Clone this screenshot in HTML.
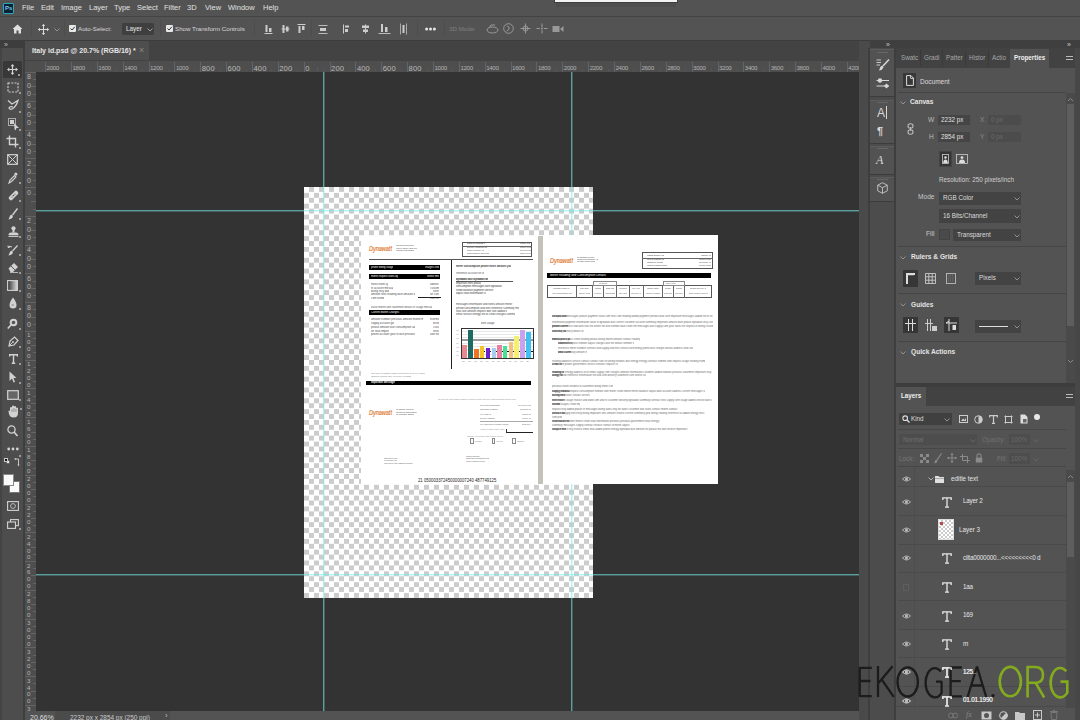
<!DOCTYPE html>
<html><head><meta charset="utf-8">
<style>
*{margin:0;padding:0;box-sizing:border-box}
html,body{width:1080px;height:720px;overflow:hidden;background:#535353;font-family:"Liberation Sans",sans-serif;color:#d8d8d8}
.a{position:absolute}
.t{position:absolute;white-space:nowrap;line-height:1}
.mi{position:absolute;top:4px;font-size:7.5px;color:#e0e0e0;white-space:nowrap;line-height:1}
.checker{background:conic-gradient(#ccc 0 25%,#fff 0 50%,#ccc 0 75%,#fff 0 100%) 0 0/10px 10.82px}
.gv{position:absolute;width:2px;background:linear-gradient(90deg,rgba(120,235,235,0.58) 50%,rgba(120,235,235,0.25) 50%)}
.gh{position:absolute;height:2px;background:linear-gradient(180deg,rgba(120,235,235,0.58) 50%,rgba(120,235,235,0.25) 50%)}
svg{position:absolute;overflow:visible}
</style></head><body>
<!-- MENUBAR -->
<div class="a" style="left:0;top:0;width:1080px;height:17px;background:#535353"></div>
<div class="a" style="left:3px;top:3px;width:11px;height:11px;background:#0a2236;border:1px solid #2aa8b8;border-radius:1px"></div>
<div class="t" style="left:5px;top:5px;font-size:6px;font-weight:bold;color:#7ac8f0">Ps</div>
<div class="mi" style="left:22px">File</div>
<div class="mi" style="left:41px">Edit</div>
<div class="mi" style="left:61px">Image</div>
<div class="mi" style="left:89px">Layer</div>
<div class="mi" style="left:114px">Type</div>
<div class="mi" style="left:137px">Select</div>
<div class="mi" style="left:164px">Filter</div>
<div class="mi" style="left:187px">3D</div>
<div class="mi" style="left:205px">View</div>
<div class="mi" style="left:228px">Window</div>
<div class="mi" style="left:263px">Help</div>
<div class="a" style="left:554px;top:0;width:124px;height:2.5px;background:#3c3c3c"></div><div class="a" style="left:556px;top:2.5px;width:120px;height:4px;background:#4e4e4e"></div>
<div class="a" style="left:555px;top:0;width:122px;height:1.5px;background:#f2f2f2"></div>
<div class="a" style="left:0;top:16px;width:1080px;height:1px;background:#444"></div>

<!-- OPTIONS BAR -->
<div class="a" style="left:0;top:17px;width:1080px;height:23px;background:#535353"></div>

<svg style="left:12px;top:24px" width="11" height="10" viewBox="0 0 11 10"><path d="M5.5 0.5 L10.5 5 L9 5 L9 9.5 L6.5 9.5 L6.5 6.5 L4.5 6.5 L4.5 9.5 L2 9.5 L2 5 L0.5 5 Z" fill="#e0e0e0"/></svg>
<div class="a" style="left:31px;top:20px;width:1px;height:17px;background:#4e4e4e"></div>
<svg style="left:38px;top:24px" width="11" height="11" viewBox="0 0 11 11"><path d="M5.5 0.5 V10.5 M0.5 5.5 H10.5" stroke="#ddd" stroke-width="1"/><path d="M5.5 0 L3.8 2 H7.2Z M5.5 11 L3.8 9 H7.2Z M0 5.5 L2 3.8 V7.2Z M11 5.5 L9 3.8 V7.2Z" fill="#ddd"/></svg>
<svg style="left:54px;top:28px" width="6" height="4" viewBox="0 0 6 4"><path d="M0.5 0.5 L3 3 L5.5 0.5" stroke="#999" fill="none" stroke-width="0.9"/></svg>
<div class="a" style="left:64px;top:20px;width:1px;height:17px;background:#4e4e4e"></div>
<div class="a" style="left:69px;top:25px;width:7px;height:7px;background:#e8e8e8;border-radius:1px"></div>
<svg style="left:69px;top:25px" width="7" height="7" viewBox="0 0 7 7"><path d="M1.5 3.5 L3 5 L5.8 1.8" stroke="#333" fill="none" stroke-width="1"/></svg>
<div class="t" style="left:78px;top:26px;font-size:6.2px;color:#d8d8d8">Auto-Select:</div>
<div class="a" style="left:122px;top:23px;width:32px;height:12px;background:#3f3f3f;border-radius:1px"></div>
<div class="t" style="left:126px;top:26px;font-size:6.4px;color:#e6e6e6">Layer</div>
<svg style="left:147px;top:28px" width="6" height="4" viewBox="0 0 6 4"><path d="M0.5 0.5 L3 3 L5.5 0.5" stroke="#aaa" fill="none" stroke-width="0.9"/></svg>
<div class="a" style="left:160px;top:20px;width:1px;height:17px;background:#4e4e4e"></div>
<div class="a" style="left:166px;top:25px;width:7px;height:7px;background:#e8e8e8;border-radius:1px"></div>
<svg style="left:166px;top:25px" width="7" height="7" viewBox="0 0 7 7"><path d="M1.5 3.5 L3 5 L5.8 1.8" stroke="#333" fill="none" stroke-width="1"/></svg>
<div class="t" style="left:175px;top:26px;font-size:6.2px;color:#d8d8d8">Show Transform Controls</div>
<div class="a" style="left:254px;top:20px;width:1px;height:17px;background:#4e4e4e"></div>
<svg style="left:264px;top:24px" width="9" height="10" viewBox="0 0 9 10"><path d="M0.5 9.5 H8.5" stroke="#ccc"/><rect x="1.5" y="1" width="2" height="7" fill="#ccc"/><rect x="5" y="4" width="2.5" height="4" fill="#ccc"/></svg>
<svg style="left:281px;top:24px" width="9" height="10" viewBox="0 0 9 10"><path d="M0.5 5 H8.5" stroke="#ccc"/><rect x="1.5" y="1" width="2" height="8" fill="#ccc"/><rect x="5" y="2.5" width="2.5" height="5" fill="#ccc"/></svg>
<svg style="left:297px;top:24px" width="9" height="10" viewBox="0 0 9 10"><path d="M0.5 0.5 H8.5" stroke="#ccc"/><rect x="1.5" y="2" width="2" height="7" fill="#ccc"/><rect x="5" y="2" width="2.5" height="4" fill="#ccc"/></svg>
<div class="a" style="left:311px;top:20px;width:1px;height:17px;background:#4e4e4e"></div>
<svg style="left:318px;top:25px" width="10" height="9" viewBox="0 0 10 9"><path d="M0.5 0.5 H9.5 M0.5 8.5 H9.5" stroke="#bbb"/><rect x="2" y="3" width="6" height="3" fill="#ccc"/></svg>
<svg style="left:343px;top:24px" width="8" height="10" viewBox="0 0 8 10"><path d="M0.5 0.5 V9.5" stroke="#ccc"/><rect x="2" y="1.5" width="4" height="2" fill="#ccc"/><rect x="2" y="5" width="3" height="3" fill="#ccc"/></svg>
<svg style="left:361px;top:24px" width="9" height="10" viewBox="0 0 9 10"><path d="M4.5 0.5 V9.5" stroke="#ccc"/><rect x="1" y="1.5" width="7" height="2.5" fill="#ccc"/><rect x="2" y="5.5" width="5" height="2.5" fill="#ccc"/></svg>
<svg style="left:378px;top:23px" width="13" height="11" viewBox="0 0 13 11"><path d="M0.5 10.5 H12.5" stroke="#bbb"/><rect x="3" y="1" width="2" height="8" fill="#ccc"/><rect x="7" y="4" width="2.5" height="5" fill="#ccc"/></svg>
<svg style="left:400px;top:23px" width="7" height="12" viewBox="0 0 7 12"><path d="M0.5 0.5 V11.5 M6.5 0.5 V11.5" stroke="#aaa"/><rect x="2.5" y="2" width="2" height="8" fill="#ccc"/></svg>
<div class="a" style="left:417px;top:20px;width:1px;height:17px;background:#4e4e4e"></div>
<svg style="left:425px;top:27px" width="11" height="4" viewBox="0 0 11 4"><circle cx="1.6" cy="2" r="1.5" fill="#e6e6e6"/><circle cx="5.5" cy="2" r="1.5" fill="#e6e6e6"/><circle cx="9.4" cy="2" r="1.5" fill="#e6e6e6"/></svg>
<div class="a" style="left:444px;top:20px;width:1px;height:17px;background:#4e4e4e"></div>
<div class="t" style="left:449px;top:26px;font-size:6.2px;color:#808080">3D Mode:</div>
<svg style="left:486px;top:24px" width="13" height="10" viewBox="0 0 13 10"><ellipse cx="6.5" cy="6" rx="5.5" ry="3" stroke="#999" fill="none"/><path d="M3 4 L5 1 L9 1" stroke="#999" fill="none"/></svg>
<svg style="left:503px;top:23px" width="11" height="11" viewBox="0 0 11 11"><circle cx="5.5" cy="5.5" r="4.8" stroke="#999" fill="none"/><path d="M4 3 Q7 3.5 6 6 Q5 8 3.5 8" stroke="#999" fill="none"/></svg>
<svg style="left:520px;top:23px" width="11" height="11" viewBox="0 0 11 11"><path d="M5.5 0.5 V10.5 M0.5 5.5 H10.5" stroke="#999"/><circle cx="5.5" cy="5.5" r="2.5" stroke="#999" fill="none"/></svg>
<svg style="left:536px;top:23px" width="12" height="11" viewBox="0 0 12 11"><path d="M6 0.5 V4 M6 7 V10.5 M0.5 5.5 H4 M8 5.5 H11.5" stroke="#999"/><circle cx="6" cy="5.5" r="1" fill="#999"/></svg>
<svg style="left:552px;top:25px" width="12" height="8" viewBox="0 0 12 8"><rect x="0.5" y="1" width="7" height="6" fill="#999"/><path d="M8 4 L11.5 1 V7 Z" fill="#999"/></svg>


<!-- TAB ROW -->
<div class="a" style="left:0;top:40px;width:1080px;height:1px;background:#3c3c3c"></div>
<div class="a" style="left:25px;top:41px;width:835px;height:20px;background:#434343"></div>
<div class="a" style="left:25px;top:41px;width:124px;height:19px;background:#4e4e4e"></div>
<div class="t" style="left:32px;top:47px;font-size:7px;font-weight:bold;color:#e6e6e6">Italy id.psd @ 20.7% (RGB/16) *</div>
<div class="t" style="left:139px;top:46px;font-size:9px;color:#8a8a8a">×</div>

<!-- RULERS -->
<div class="a" style="left:25px;top:61px;width:835px;height:11px;background:#4e4e4e"></div>
<div class="a" style="left:25px;top:72px;width:11px;height:639px;background:#4e4e4e"></div>
<div class="a" style="left:0;top:0;width:1080px;height:720px;overflow:hidden;clip-path:inset(61px 221px 9px 25px)"><div class="t" style="left:27px;top:73.4px;font-size:7px;color:#b4b4b4">8</div>
<div class="t" style="left:27px;top:81.9px;font-size:7px;color:#b4b4b4">0</div>
<div class="t" style="left:27px;top:90.4px;font-size:7px;color:#b4b4b4">0</div>
<div class="t" style="left:27px;top:102.2px;font-size:7px;color:#b4b4b4">6</div>
<div class="t" style="left:27px;top:110.7px;font-size:7px;color:#b4b4b4">0</div>
<div class="t" style="left:27px;top:119.2px;font-size:7px;color:#b4b4b4">0</div>
<div class="t" style="left:27px;top:131.0px;font-size:7px;color:#b4b4b4">4</div>
<div class="t" style="left:27px;top:139.5px;font-size:7px;color:#b4b4b4">0</div>
<div class="t" style="left:27px;top:148.0px;font-size:7px;color:#b4b4b4">0</div>
<div class="t" style="left:27px;top:159.7px;font-size:7px;color:#b4b4b4">2</div>
<div class="t" style="left:27px;top:168.2px;font-size:7px;color:#b4b4b4">0</div>
<div class="t" style="left:27px;top:176.7px;font-size:7px;color:#b4b4b4">0</div>
<div class="t" style="left:27px;top:188.5px;font-size:7px;color:#b4b4b4">0</div>
<div class="t" style="left:27px;top:217.3px;font-size:7px;color:#b4b4b4">2</div>
<div class="t" style="left:27px;top:225.8px;font-size:7px;color:#b4b4b4">0</div>
<div class="t" style="left:27px;top:234.3px;font-size:7px;color:#b4b4b4">0</div>
<div class="t" style="left:27px;top:246.0px;font-size:7px;color:#b4b4b4">4</div>
<div class="t" style="left:27px;top:254.5px;font-size:7px;color:#b4b4b4">0</div>
<div class="t" style="left:27px;top:263.0px;font-size:7px;color:#b4b4b4">0</div>
<div class="t" style="left:27px;top:274.8px;font-size:7px;color:#b4b4b4">6</div>
<div class="t" style="left:27px;top:283.3px;font-size:7px;color:#b4b4b4">0</div>
<div class="t" style="left:27px;top:291.8px;font-size:7px;color:#b4b4b4">0</div>
<div class="t" style="left:27px;top:303.6px;font-size:7px;color:#b4b4b4">8</div>
<div class="t" style="left:27px;top:312.1px;font-size:7px;color:#b4b4b4">0</div>
<div class="t" style="left:27px;top:320.6px;font-size:7px;color:#b4b4b4">0</div>
<div class="t" style="left:27px;top:332.4px;font-size:6.2px;color:#b4b4b4">1</div>
<div class="t" style="left:27px;top:339.2px;font-size:6.2px;color:#b4b4b4">0</div>
<div class="t" style="left:27px;top:346.2px;font-size:6.2px;color:#b4b4b4">0</div>
<div class="t" style="left:27px;top:353.1px;font-size:6.2px;color:#b4b4b4">0</div>
<div class="t" style="left:27px;top:361.1px;font-size:6.2px;color:#b4b4b4">1</div>
<div class="t" style="left:27px;top:368.0px;font-size:6.2px;color:#b4b4b4">2</div>
<div class="t" style="left:27px;top:374.9px;font-size:6.2px;color:#b4b4b4">0</div>
<div class="t" style="left:27px;top:381.8px;font-size:6.2px;color:#b4b4b4">0</div>
<div class="t" style="left:27px;top:389.9px;font-size:6.2px;color:#b4b4b4">1</div>
<div class="t" style="left:27px;top:396.8px;font-size:6.2px;color:#b4b4b4">4</div>
<div class="t" style="left:27px;top:403.7px;font-size:6.2px;color:#b4b4b4">0</div>
<div class="t" style="left:27px;top:410.6px;font-size:6.2px;color:#b4b4b4">0</div>
<div class="t" style="left:27px;top:418.7px;font-size:6.2px;color:#b4b4b4">1</div>
<div class="t" style="left:27px;top:425.6px;font-size:6.2px;color:#b4b4b4">6</div>
<div class="t" style="left:27px;top:432.5px;font-size:6.2px;color:#b4b4b4">0</div>
<div class="t" style="left:27px;top:439.4px;font-size:6.2px;color:#b4b4b4">0</div>
<div class="t" style="left:27px;top:447.4px;font-size:6.2px;color:#b4b4b4">1</div>
<div class="t" style="left:27px;top:454.3px;font-size:6.2px;color:#b4b4b4">8</div>
<div class="t" style="left:27px;top:461.2px;font-size:6.2px;color:#b4b4b4">0</div>
<div class="t" style="left:27px;top:468.1px;font-size:6.2px;color:#b4b4b4">0</div>
<div class="t" style="left:27px;top:476.2px;font-size:6.2px;color:#b4b4b4">2</div>
<div class="t" style="left:27px;top:483.1px;font-size:6.2px;color:#b4b4b4">0</div>
<div class="t" style="left:27px;top:490.0px;font-size:6.2px;color:#b4b4b4">0</div>
<div class="t" style="left:27px;top:496.9px;font-size:6.2px;color:#b4b4b4">0</div>
<div class="t" style="left:27px;top:505.0px;font-size:6.2px;color:#b4b4b4">2</div>
<div class="t" style="left:27px;top:511.9px;font-size:6.2px;color:#b4b4b4">2</div>
<div class="t" style="left:27px;top:518.8px;font-size:6.2px;color:#b4b4b4">0</div>
<div class="t" style="left:27px;top:525.7px;font-size:6.2px;color:#b4b4b4">0</div>
<div class="t" style="left:27px;top:533.7px;font-size:6.2px;color:#b4b4b4">2</div>
<div class="t" style="left:27px;top:540.6px;font-size:6.2px;color:#b4b4b4">4</div>
<div class="t" style="left:27px;top:547.5px;font-size:6.2px;color:#b4b4b4">0</div>
<div class="t" style="left:27px;top:554.4px;font-size:6.2px;color:#b4b4b4">0</div>
<div class="t" style="left:27px;top:562.5px;font-size:6.2px;color:#b4b4b4">2</div>
<div class="t" style="left:27px;top:569.4px;font-size:6.2px;color:#b4b4b4">6</div>
<div class="t" style="left:27px;top:576.3px;font-size:6.2px;color:#b4b4b4">0</div>
<div class="t" style="left:27px;top:583.2px;font-size:6.2px;color:#b4b4b4">0</div>
<div class="t" style="left:27px;top:591.3px;font-size:6.2px;color:#b4b4b4">2</div>
<div class="t" style="left:27px;top:598.2px;font-size:6.2px;color:#b4b4b4">8</div>
<div class="t" style="left:27px;top:605.1px;font-size:6.2px;color:#b4b4b4">0</div>
<div class="t" style="left:27px;top:612.0px;font-size:6.2px;color:#b4b4b4">0</div>
<div class="t" style="left:27px;top:620.0px;font-size:6.2px;color:#b4b4b4">3</div>
<div class="t" style="left:27px;top:626.9px;font-size:6.2px;color:#b4b4b4">0</div>
<div class="t" style="left:27px;top:633.8px;font-size:6.2px;color:#b4b4b4">0</div>
<div class="t" style="left:27px;top:640.8px;font-size:6.2px;color:#b4b4b4">0</div>
<div class="t" style="left:27px;top:648.8px;font-size:6.2px;color:#b4b4b4">3</div>
<div class="t" style="left:27px;top:655.7px;font-size:6.2px;color:#b4b4b4">2</div>
<div class="t" style="left:27px;top:662.6px;font-size:6.2px;color:#b4b4b4">0</div>
<div class="t" style="left:27px;top:669.5px;font-size:6.2px;color:#b4b4b4">0</div>
<div class="t" style="left:27px;top:677.6px;font-size:6.2px;color:#b4b4b4">3</div>
<div class="t" style="left:27px;top:684.5px;font-size:6.2px;color:#b4b4b4">4</div>
<div class="t" style="left:27px;top:691.4px;font-size:6.2px;color:#b4b4b4">0</div>
<div class="t" style="left:27px;top:698.3px;font-size:6.2px;color:#b4b4b4">0</div>
<div class="t" style="left:27px;top:706.4px;font-size:6.2px;color:#b4b4b4">3</div>
<div class="t" style="left:27px;top:713.3px;font-size:6.2px;color:#b4b4b4">6</div>
<div class="t" style="left:27px;top:720.2px;font-size:6.2px;color:#b4b4b4">0</div>
<div class="t" style="left:27px;top:727.1px;font-size:6.2px;color:#b4b4b4">0</div><div class="a" style="left:45.1px;top:62px;width:1px;height:10px;background:#646464"></div>
<div class="a" style="left:51.6px;top:69px;width:1px;height:2px;background:#575757"></div>
<div class="a" style="left:58.0px;top:67px;width:1px;height:4px;background:#5a5a5a"></div>
<div class="a" style="left:64.5px;top:69px;width:1px;height:2px;background:#575757"></div>
<div class="t" style="left:46.6px;top:65px;font-size:6.2px;color:#b0b0b0;letter-spacing:-0.35px">2000</div>
<div class="a" style="left:71.0px;top:62px;width:1px;height:10px;background:#646464"></div>
<div class="a" style="left:77.4px;top:69px;width:1px;height:2px;background:#575757"></div>
<div class="a" style="left:83.9px;top:67px;width:1px;height:4px;background:#5a5a5a"></div>
<div class="a" style="left:90.4px;top:69px;width:1px;height:2px;background:#575757"></div>
<div class="t" style="left:72.5px;top:65px;font-size:6.2px;color:#b0b0b0;letter-spacing:-0.35px">1800</div>
<div class="a" style="left:96.8px;top:62px;width:1px;height:10px;background:#646464"></div>
<div class="a" style="left:103.3px;top:69px;width:1px;height:2px;background:#575757"></div>
<div class="a" style="left:109.8px;top:67px;width:1px;height:4px;background:#5a5a5a"></div>
<div class="a" style="left:116.2px;top:69px;width:1px;height:2px;background:#575757"></div>
<div class="t" style="left:98.3px;top:65px;font-size:6.2px;color:#b0b0b0;letter-spacing:-0.35px">1600</div>
<div class="a" style="left:122.7px;top:62px;width:1px;height:10px;background:#646464"></div>
<div class="a" style="left:129.1px;top:69px;width:1px;height:2px;background:#575757"></div>
<div class="a" style="left:135.6px;top:67px;width:1px;height:4px;background:#5a5a5a"></div>
<div class="a" style="left:142.1px;top:69px;width:1px;height:2px;background:#575757"></div>
<div class="t" style="left:124.2px;top:65px;font-size:6.2px;color:#b0b0b0;letter-spacing:-0.35px">1400</div>
<div class="a" style="left:148.5px;top:62px;width:1px;height:10px;background:#646464"></div>
<div class="a" style="left:155.0px;top:69px;width:1px;height:2px;background:#575757"></div>
<div class="a" style="left:161.5px;top:67px;width:1px;height:4px;background:#5a5a5a"></div>
<div class="a" style="left:167.9px;top:69px;width:1px;height:2px;background:#575757"></div>
<div class="t" style="left:150.0px;top:65px;font-size:6.2px;color:#b0b0b0;letter-spacing:-0.35px">1200</div>
<div class="a" style="left:174.4px;top:62px;width:1px;height:10px;background:#646464"></div>
<div class="a" style="left:180.9px;top:69px;width:1px;height:2px;background:#575757"></div>
<div class="a" style="left:187.3px;top:67px;width:1px;height:4px;background:#5a5a5a"></div>
<div class="a" style="left:193.8px;top:69px;width:1px;height:2px;background:#575757"></div>
<div class="t" style="left:175.9px;top:65px;font-size:6.2px;color:#b0b0b0;letter-spacing:-0.35px">1000</div>
<div class="a" style="left:200.3px;top:62px;width:1px;height:10px;background:#646464"></div>
<div class="a" style="left:206.7px;top:69px;width:1px;height:2px;background:#575757"></div>
<div class="a" style="left:213.2px;top:67px;width:1px;height:4px;background:#5a5a5a"></div>
<div class="a" style="left:219.7px;top:69px;width:1px;height:2px;background:#575757"></div>
<div class="t" style="left:201.8px;top:64.5px;font-size:7.6px;color:#b8b8b8;letter-spacing:0.1px">800</div>
<div class="a" style="left:226.1px;top:62px;width:1px;height:10px;background:#646464"></div>
<div class="a" style="left:232.6px;top:69px;width:1px;height:2px;background:#575757"></div>
<div class="a" style="left:239.1px;top:67px;width:1px;height:4px;background:#5a5a5a"></div>
<div class="a" style="left:245.5px;top:69px;width:1px;height:2px;background:#575757"></div>
<div class="t" style="left:227.6px;top:64.5px;font-size:7.6px;color:#b8b8b8;letter-spacing:0.1px">600</div>
<div class="a" style="left:252.0px;top:62px;width:1px;height:10px;background:#646464"></div>
<div class="a" style="left:258.4px;top:69px;width:1px;height:2px;background:#575757"></div>
<div class="a" style="left:264.9px;top:67px;width:1px;height:4px;background:#5a5a5a"></div>
<div class="a" style="left:271.4px;top:69px;width:1px;height:2px;background:#575757"></div>
<div class="t" style="left:253.5px;top:64.5px;font-size:7.6px;color:#b8b8b8;letter-spacing:0.1px">400</div>
<div class="a" style="left:277.8px;top:62px;width:1px;height:10px;background:#646464"></div>
<div class="a" style="left:284.3px;top:69px;width:1px;height:2px;background:#575757"></div>
<div class="a" style="left:290.8px;top:67px;width:1px;height:4px;background:#5a5a5a"></div>
<div class="a" style="left:297.2px;top:69px;width:1px;height:2px;background:#575757"></div>
<div class="t" style="left:279.3px;top:64.5px;font-size:7.6px;color:#b8b8b8;letter-spacing:0.1px">200</div>
<div class="a" style="left:303.7px;top:62px;width:1px;height:10px;background:#646464"></div>
<div class="a" style="left:310.2px;top:69px;width:1px;height:2px;background:#575757"></div>
<div class="a" style="left:316.6px;top:67px;width:1px;height:4px;background:#5a5a5a"></div>
<div class="a" style="left:323.1px;top:69px;width:1px;height:2px;background:#575757"></div>
<div class="t" style="left:305.2px;top:64.5px;font-size:7.6px;color:#b8b8b8;letter-spacing:0.1px">0</div>
<div class="a" style="left:329.6px;top:62px;width:1px;height:10px;background:#646464"></div>
<div class="a" style="left:336.0px;top:69px;width:1px;height:2px;background:#575757"></div>
<div class="a" style="left:342.5px;top:67px;width:1px;height:4px;background:#5a5a5a"></div>
<div class="a" style="left:349.0px;top:69px;width:1px;height:2px;background:#575757"></div>
<div class="t" style="left:331.1px;top:64.5px;font-size:7.6px;color:#b8b8b8;letter-spacing:0.1px">200</div>
<div class="a" style="left:355.4px;top:62px;width:1px;height:10px;background:#646464"></div>
<div class="a" style="left:361.9px;top:69px;width:1px;height:2px;background:#575757"></div>
<div class="a" style="left:368.3px;top:67px;width:1px;height:4px;background:#5a5a5a"></div>
<div class="a" style="left:374.8px;top:69px;width:1px;height:2px;background:#575757"></div>
<div class="t" style="left:356.9px;top:64.5px;font-size:7.6px;color:#b8b8b8;letter-spacing:0.1px">400</div>
<div class="a" style="left:381.3px;top:62px;width:1px;height:10px;background:#646464"></div>
<div class="a" style="left:387.7px;top:69px;width:1px;height:2px;background:#575757"></div>
<div class="a" style="left:394.2px;top:67px;width:1px;height:4px;background:#5a5a5a"></div>
<div class="a" style="left:400.7px;top:69px;width:1px;height:2px;background:#575757"></div>
<div class="t" style="left:382.8px;top:64.5px;font-size:7.6px;color:#b8b8b8;letter-spacing:0.1px">600</div>
<div class="a" style="left:407.1px;top:62px;width:1px;height:10px;background:#646464"></div>
<div class="a" style="left:413.6px;top:69px;width:1px;height:2px;background:#575757"></div>
<div class="a" style="left:420.1px;top:67px;width:1px;height:4px;background:#5a5a5a"></div>
<div class="a" style="left:426.5px;top:69px;width:1px;height:2px;background:#575757"></div>
<div class="t" style="left:408.6px;top:64.5px;font-size:7.6px;color:#b8b8b8;letter-spacing:0.1px">800</div>
<div class="a" style="left:433.0px;top:62px;width:1px;height:10px;background:#646464"></div>
<div class="a" style="left:439.5px;top:69px;width:1px;height:2px;background:#575757"></div>
<div class="a" style="left:445.9px;top:67px;width:1px;height:4px;background:#5a5a5a"></div>
<div class="a" style="left:452.4px;top:69px;width:1px;height:2px;background:#575757"></div>
<div class="t" style="left:434.5px;top:65px;font-size:6.2px;color:#b0b0b0;letter-spacing:-0.35px">1000</div>
<div class="a" style="left:458.9px;top:62px;width:1px;height:10px;background:#646464"></div>
<div class="a" style="left:465.3px;top:69px;width:1px;height:2px;background:#575757"></div>
<div class="a" style="left:471.8px;top:67px;width:1px;height:4px;background:#5a5a5a"></div>
<div class="a" style="left:478.3px;top:69px;width:1px;height:2px;background:#575757"></div>
<div class="t" style="left:460.4px;top:65px;font-size:6.2px;color:#b0b0b0;letter-spacing:-0.35px">1200</div>
<div class="a" style="left:484.7px;top:62px;width:1px;height:10px;background:#646464"></div>
<div class="a" style="left:491.2px;top:69px;width:1px;height:2px;background:#575757"></div>
<div class="a" style="left:497.6px;top:67px;width:1px;height:4px;background:#5a5a5a"></div>
<div class="a" style="left:504.1px;top:69px;width:1px;height:2px;background:#575757"></div>
<div class="t" style="left:486.2px;top:65px;font-size:6.2px;color:#b0b0b0;letter-spacing:-0.35px">1400</div>
<div class="a" style="left:510.6px;top:62px;width:1px;height:10px;background:#646464"></div>
<div class="a" style="left:517.0px;top:69px;width:1px;height:2px;background:#575757"></div>
<div class="a" style="left:523.5px;top:67px;width:1px;height:4px;background:#5a5a5a"></div>
<div class="a" style="left:530.0px;top:69px;width:1px;height:2px;background:#575757"></div>
<div class="t" style="left:512.1px;top:65px;font-size:6.2px;color:#b0b0b0;letter-spacing:-0.35px">1600</div>
<div class="a" style="left:536.4px;top:62px;width:1px;height:10px;background:#646464"></div>
<div class="a" style="left:542.9px;top:69px;width:1px;height:2px;background:#575757"></div>
<div class="a" style="left:549.4px;top:67px;width:1px;height:4px;background:#5a5a5a"></div>
<div class="a" style="left:555.8px;top:69px;width:1px;height:2px;background:#575757"></div>
<div class="t" style="left:537.9px;top:65px;font-size:6.2px;color:#b0b0b0;letter-spacing:-0.35px">1800</div>
<div class="a" style="left:562.3px;top:62px;width:1px;height:10px;background:#646464"></div>
<div class="a" style="left:568.8px;top:69px;width:1px;height:2px;background:#575757"></div>
<div class="a" style="left:575.2px;top:67px;width:1px;height:4px;background:#5a5a5a"></div>
<div class="a" style="left:581.7px;top:69px;width:1px;height:2px;background:#575757"></div>
<div class="t" style="left:563.8px;top:65px;font-size:6.2px;color:#b0b0b0;letter-spacing:-0.35px">2000</div>
<div class="a" style="left:588.2px;top:62px;width:1px;height:10px;background:#646464"></div>
<div class="a" style="left:594.6px;top:69px;width:1px;height:2px;background:#575757"></div>
<div class="a" style="left:601.1px;top:67px;width:1px;height:4px;background:#5a5a5a"></div>
<div class="a" style="left:607.6px;top:69px;width:1px;height:2px;background:#575757"></div>
<div class="t" style="left:589.7px;top:65px;font-size:6.2px;color:#b0b0b0;letter-spacing:-0.35px">2200</div>
<div class="a" style="left:614.0px;top:62px;width:1px;height:10px;background:#646464"></div>
<div class="a" style="left:620.5px;top:69px;width:1px;height:2px;background:#575757"></div>
<div class="a" style="left:626.9px;top:67px;width:1px;height:4px;background:#5a5a5a"></div>
<div class="a" style="left:633.4px;top:69px;width:1px;height:2px;background:#575757"></div>
<div class="t" style="left:615.5px;top:65px;font-size:6.2px;color:#b0b0b0;letter-spacing:-0.35px">2400</div>
<div class="a" style="left:639.9px;top:62px;width:1px;height:10px;background:#646464"></div>
<div class="a" style="left:646.3px;top:69px;width:1px;height:2px;background:#575757"></div>
<div class="a" style="left:652.8px;top:67px;width:1px;height:4px;background:#5a5a5a"></div>
<div class="a" style="left:659.3px;top:69px;width:1px;height:2px;background:#575757"></div>
<div class="t" style="left:641.4px;top:65px;font-size:6.2px;color:#b0b0b0;letter-spacing:-0.35px">2600</div>
<div class="a" style="left:665.7px;top:62px;width:1px;height:10px;background:#646464"></div>
<div class="a" style="left:672.2px;top:69px;width:1px;height:2px;background:#575757"></div>
<div class="a" style="left:678.7px;top:67px;width:1px;height:4px;background:#5a5a5a"></div>
<div class="a" style="left:685.1px;top:69px;width:1px;height:2px;background:#575757"></div>
<div class="t" style="left:667.2px;top:65px;font-size:6.2px;color:#b0b0b0;letter-spacing:-0.35px">2800</div>
<div class="a" style="left:691.6px;top:62px;width:1px;height:10px;background:#646464"></div>
<div class="a" style="left:698.1px;top:69px;width:1px;height:2px;background:#575757"></div>
<div class="a" style="left:704.5px;top:67px;width:1px;height:4px;background:#5a5a5a"></div>
<div class="a" style="left:711.0px;top:69px;width:1px;height:2px;background:#575757"></div>
<div class="t" style="left:693.1px;top:65px;font-size:6.2px;color:#b0b0b0;letter-spacing:-0.35px">3000</div>
<div class="a" style="left:717.5px;top:62px;width:1px;height:10px;background:#646464"></div>
<div class="a" style="left:723.9px;top:69px;width:1px;height:2px;background:#575757"></div>
<div class="a" style="left:730.4px;top:67px;width:1px;height:4px;background:#5a5a5a"></div>
<div class="a" style="left:736.9px;top:69px;width:1px;height:2px;background:#575757"></div>
<div class="t" style="left:719.0px;top:65px;font-size:6.2px;color:#b0b0b0;letter-spacing:-0.35px">3200</div>
<div class="a" style="left:743.3px;top:62px;width:1px;height:10px;background:#646464"></div>
<div class="a" style="left:749.8px;top:69px;width:1px;height:2px;background:#575757"></div>
<div class="a" style="left:756.2px;top:67px;width:1px;height:4px;background:#5a5a5a"></div>
<div class="a" style="left:762.7px;top:69px;width:1px;height:2px;background:#575757"></div>
<div class="t" style="left:744.8px;top:65px;font-size:6.2px;color:#b0b0b0;letter-spacing:-0.35px">3400</div>
<div class="a" style="left:769.2px;top:62px;width:1px;height:10px;background:#646464"></div>
<div class="a" style="left:775.6px;top:69px;width:1px;height:2px;background:#575757"></div>
<div class="a" style="left:782.1px;top:67px;width:1px;height:4px;background:#5a5a5a"></div>
<div class="a" style="left:788.6px;top:69px;width:1px;height:2px;background:#575757"></div>
<div class="t" style="left:770.7px;top:65px;font-size:6.2px;color:#b0b0b0;letter-spacing:-0.35px">3600</div>
<div class="a" style="left:795.0px;top:62px;width:1px;height:10px;background:#646464"></div>
<div class="a" style="left:801.5px;top:69px;width:1px;height:2px;background:#575757"></div>
<div class="a" style="left:808.0px;top:67px;width:1px;height:4px;background:#5a5a5a"></div>
<div class="a" style="left:814.4px;top:69px;width:1px;height:2px;background:#575757"></div>
<div class="t" style="left:796.5px;top:65px;font-size:6.2px;color:#b0b0b0;letter-spacing:-0.35px">3800</div>
<div class="a" style="left:820.9px;top:62px;width:1px;height:10px;background:#646464"></div>
<div class="a" style="left:827.4px;top:69px;width:1px;height:2px;background:#575757"></div>
<div class="a" style="left:833.8px;top:67px;width:1px;height:4px;background:#5a5a5a"></div>
<div class="a" style="left:840.3px;top:69px;width:1px;height:2px;background:#575757"></div>
<div class="t" style="left:822.4px;top:65px;font-size:6.2px;color:#b0b0b0;letter-spacing:-0.35px">4000</div>
<div class="a" style="left:846.8px;top:62px;width:1px;height:10px;background:#646464"></div>
<div class="a" style="left:853.2px;top:69px;width:1px;height:2px;background:#575757"></div>
<div class="t" style="left:848.3px;top:65px;font-size:6.2px;color:#b0b0b0;letter-spacing:-0.35px">4200</div>
<div class="a" style="left:25px;top:71.9px;width:11px;height:1px;background:#646464"></div>
<div class="a" style="left:33px;top:79.1px;width:3px;height:1px;background:#666"></div>
<div class="a" style="left:31px;top:86.3px;width:5px;height:1px;background:#666"></div>
<div class="a" style="left:33px;top:93.5px;width:3px;height:1px;background:#666"></div>
<div class="a" style="left:25px;top:100.7px;width:11px;height:1px;background:#646464"></div>
<div class="a" style="left:33px;top:107.9px;width:3px;height:1px;background:#666"></div>
<div class="a" style="left:31px;top:115.1px;width:5px;height:1px;background:#666"></div>
<div class="a" style="left:33px;top:122.3px;width:3px;height:1px;background:#666"></div>
<div class="a" style="left:25px;top:129.5px;width:11px;height:1px;background:#646464"></div>
<div class="a" style="left:33px;top:136.7px;width:3px;height:1px;background:#666"></div>
<div class="a" style="left:31px;top:143.8px;width:5px;height:1px;background:#666"></div>
<div class="a" style="left:33px;top:151.0px;width:3px;height:1px;background:#666"></div>
<div class="a" style="left:25px;top:158.2px;width:11px;height:1px;background:#646464"></div>
<div class="a" style="left:33px;top:165.4px;width:3px;height:1px;background:#666"></div>
<div class="a" style="left:31px;top:172.6px;width:5px;height:1px;background:#666"></div>
<div class="a" style="left:33px;top:179.8px;width:3px;height:1px;background:#666"></div>
<div class="a" style="left:25px;top:187.0px;width:11px;height:1px;background:#646464"></div>
<div class="a" style="left:33px;top:194.2px;width:3px;height:1px;background:#666"></div>
<div class="a" style="left:31px;top:201.4px;width:5px;height:1px;background:#666"></div>
<div class="a" style="left:33px;top:208.6px;width:3px;height:1px;background:#666"></div>
<div class="a" style="left:25px;top:215.8px;width:11px;height:1px;background:#646464"></div>
<div class="a" style="left:33px;top:223.0px;width:3px;height:1px;background:#666"></div>
<div class="a" style="left:31px;top:230.2px;width:5px;height:1px;background:#666"></div>
<div class="a" style="left:33px;top:237.3px;width:3px;height:1px;background:#666"></div>
<div class="a" style="left:25px;top:244.5px;width:11px;height:1px;background:#646464"></div>
<div class="a" style="left:33px;top:251.7px;width:3px;height:1px;background:#666"></div>
<div class="a" style="left:31px;top:258.9px;width:5px;height:1px;background:#666"></div>
<div class="a" style="left:33px;top:266.1px;width:3px;height:1px;background:#666"></div>
<div class="a" style="left:25px;top:273.3px;width:11px;height:1px;background:#646464"></div>
<div class="a" style="left:33px;top:280.5px;width:3px;height:1px;background:#666"></div>
<div class="a" style="left:31px;top:287.7px;width:5px;height:1px;background:#666"></div>
<div class="a" style="left:33px;top:294.9px;width:3px;height:1px;background:#666"></div>
<div class="a" style="left:25px;top:302.1px;width:11px;height:1px;background:#646464"></div>
<div class="a" style="left:33px;top:309.3px;width:3px;height:1px;background:#666"></div>
<div class="a" style="left:31px;top:316.5px;width:5px;height:1px;background:#666"></div>
<div class="a" style="left:33px;top:323.7px;width:3px;height:1px;background:#666"></div>
<div class="a" style="left:25px;top:330.9px;width:11px;height:1px;background:#646464"></div>
<div class="a" style="left:33px;top:338.0px;width:3px;height:1px;background:#666"></div>
<div class="a" style="left:31px;top:345.2px;width:5px;height:1px;background:#666"></div>
<div class="a" style="left:33px;top:352.4px;width:3px;height:1px;background:#666"></div>
<div class="a" style="left:25px;top:359.6px;width:11px;height:1px;background:#646464"></div>
<div class="a" style="left:33px;top:366.8px;width:3px;height:1px;background:#666"></div>
<div class="a" style="left:31px;top:374.0px;width:5px;height:1px;background:#666"></div>
<div class="a" style="left:33px;top:381.2px;width:3px;height:1px;background:#666"></div>
<div class="a" style="left:25px;top:388.4px;width:11px;height:1px;background:#646464"></div>
<div class="a" style="left:33px;top:395.6px;width:3px;height:1px;background:#666"></div>
<div class="a" style="left:31px;top:402.8px;width:5px;height:1px;background:#666"></div>
<div class="a" style="left:33px;top:410.0px;width:3px;height:1px;background:#666"></div>
<div class="a" style="left:25px;top:417.2px;width:11px;height:1px;background:#646464"></div>
<div class="a" style="left:33px;top:424.4px;width:3px;height:1px;background:#666"></div>
<div class="a" style="left:31px;top:431.5px;width:5px;height:1px;background:#666"></div>
<div class="a" style="left:33px;top:438.7px;width:3px;height:1px;background:#666"></div>
<div class="a" style="left:25px;top:445.9px;width:11px;height:1px;background:#646464"></div>
<div class="a" style="left:33px;top:453.1px;width:3px;height:1px;background:#666"></div>
<div class="a" style="left:31px;top:460.3px;width:5px;height:1px;background:#666"></div>
<div class="a" style="left:33px;top:467.5px;width:3px;height:1px;background:#666"></div>
<div class="a" style="left:25px;top:474.7px;width:11px;height:1px;background:#646464"></div>
<div class="a" style="left:33px;top:481.9px;width:3px;height:1px;background:#666"></div>
<div class="a" style="left:31px;top:489.1px;width:5px;height:1px;background:#666"></div>
<div class="a" style="left:33px;top:496.3px;width:3px;height:1px;background:#666"></div>
<div class="a" style="left:25px;top:503.5px;width:11px;height:1px;background:#646464"></div>
<div class="a" style="left:33px;top:510.7px;width:3px;height:1px;background:#666"></div>
<div class="a" style="left:31px;top:517.9px;width:5px;height:1px;background:#666"></div>
<div class="a" style="left:33px;top:525.0px;width:3px;height:1px;background:#666"></div>
<div class="a" style="left:25px;top:532.2px;width:11px;height:1px;background:#646464"></div>
<div class="a" style="left:33px;top:539.4px;width:3px;height:1px;background:#666"></div>
<div class="a" style="left:31px;top:546.6px;width:5px;height:1px;background:#666"></div>
<div class="a" style="left:33px;top:553.8px;width:3px;height:1px;background:#666"></div>
<div class="a" style="left:25px;top:561.0px;width:11px;height:1px;background:#646464"></div>
<div class="a" style="left:33px;top:568.2px;width:3px;height:1px;background:#666"></div>
<div class="a" style="left:31px;top:575.4px;width:5px;height:1px;background:#666"></div>
<div class="a" style="left:33px;top:582.6px;width:3px;height:1px;background:#666"></div>
<div class="a" style="left:25px;top:589.8px;width:11px;height:1px;background:#646464"></div>
<div class="a" style="left:33px;top:597.0px;width:3px;height:1px;background:#666"></div>
<div class="a" style="left:31px;top:604.2px;width:5px;height:1px;background:#666"></div>
<div class="a" style="left:33px;top:611.4px;width:3px;height:1px;background:#666"></div>
<div class="a" style="left:25px;top:618.5px;width:11px;height:1px;background:#646464"></div>
<div class="a" style="left:33px;top:625.7px;width:3px;height:1px;background:#666"></div>
<div class="a" style="left:31px;top:632.9px;width:5px;height:1px;background:#666"></div>
<div class="a" style="left:33px;top:640.1px;width:3px;height:1px;background:#666"></div>
<div class="a" style="left:25px;top:647.3px;width:11px;height:1px;background:#646464"></div>
<div class="a" style="left:33px;top:654.5px;width:3px;height:1px;background:#666"></div>
<div class="a" style="left:31px;top:661.7px;width:5px;height:1px;background:#666"></div>
<div class="a" style="left:33px;top:668.9px;width:3px;height:1px;background:#666"></div>
<div class="a" style="left:25px;top:676.1px;width:11px;height:1px;background:#646464"></div>
<div class="a" style="left:33px;top:683.3px;width:3px;height:1px;background:#666"></div>
<div class="a" style="left:31px;top:690.5px;width:5px;height:1px;background:#666"></div>
<div class="a" style="left:33px;top:697.7px;width:3px;height:1px;background:#666"></div>
<div class="a" style="left:25px;top:704.9px;width:11px;height:1px;background:#646464"></div>
</div>
<div class="a" style="left:25px;top:61px;width:11px;height:11px;background:#4e4e4e"></div>
<!-- CANVAS -->
<div class="a" style="left:36px;top:72px;width:823px;height:639px;background:#333"></div>

<!-- STATUS -->
<div class="a" style="left:25px;top:711px;width:835px;height:9px;background:#535353"></div><div class="a" style="left:55px;top:711px;width:115px;height:9px;background:#4b4b4b"></div>
<div class="t" style="left:30px;top:714px;font-size:7px;color:#ddd">20.66%</div>
<div class="t" style="left:70px;top:714px;font-size:7px;color:#ccc;transform:scaleX(0.92);transform-origin:0 0">2232 px x 2854 px (250 ppi)</div>
<div class="t" style="left:165px;top:712px;font-size:8px;color:#bbb">›</div>

<!-- LEFT TOOLBAR -->
<div class="a" style="left:0;top:41px;width:25px;height:679px;background:#4d4d4d"></div>
<div class="a" style="left:0;top:41px;width:25px;height:7px;background:#3d3d3d"></div>
<div class="t" style="left:4px;top:41px;font-size:7px;color:#bbb">»</div>
<div class="a" style="left:0;top:48px;width:2px;height:672px;background:#444"></div>
<div class="a" style="left:23px;top:48px;width:2px;height:672px;background:#3e3e3e"></div>
<div class="a" style="left:3px;top:61px;width:19px;height:17px;background:#383838;border-radius:1px"></div>
<svg style="left:7px;top:64px" width="11" height="11" viewBox="0 0 11 11"><path d="M5.5 1.5 V9.5 M1.5 5.5 H9.5" stroke="#d2d2d2" stroke-width="1.2"/><path d="M5.5 0 L3.6 2.3 H7.4Z M5.5 11 L3.6 8.7 H7.4Z M0 5.5 L2.3 3.6 V7.4Z M11 5.5 L8.7 3.6 V7.4Z" fill="#d2d2d2"/></svg>
<div class="a" style="left:18px;top:74px;width:2px;height:2px;background:#9a9a9a"></div>
<svg style="left:7px;top:82px" width="12" height="11" viewBox="0 0 12 11"><rect x="1" y="1" width="10" height="9" stroke="#d2d2d2" fill="none" stroke-width="1.1" stroke-dasharray="2 1.3"/></svg>
<div class="a" style="left:19px;top:92px;width:2px;height:2px;background:#9a9a9a"></div>
<svg style="left:7px;top:99px" width="12" height="12" viewBox="0 0 12 12"><path d="M1 1.5 L5 5 L11 1.5 Q9 8 5 10 Q3 11 2 9 Q3 7 6 8" stroke="#d2d2d2" fill="none" stroke-width="1.3"/></svg>
<div class="a" style="left:19px;top:111px;width:2px;height:2px;background:#9a9a9a"></div>
<svg style="left:8px;top:118px" width="12" height="13" viewBox="0 0 12 13"><rect x="0.5" y="0.5" width="7" height="7" stroke="#aaa" fill="none"/><rect x="2" y="2" width="4" height="4" fill="#d2d2d2"/><path d="M6 5 L11 10 L8.5 10 L7.5 12.5 L6.5 11 Z" fill="#d2d2d2"/></svg>
<div class="a" style="left:19px;top:129px;width:2px;height:2px;background:#9a9a9a"></div>
<svg style="left:6px;top:135px" width="13" height="13" viewBox="0 0 13 13"><path d="M3.5 0.5 V9.5 H12.5 M0.5 3.5 H9.5 V12.5" stroke="#d2d2d2" fill="none" stroke-width="1.4"/></svg>
<div class="a" style="left:19px;top:147px;width:2px;height:2px;background:#9a9a9a"></div>
<svg style="left:7px;top:154px" width="11" height="11" viewBox="0 0 11 11"><rect x="0.7" y="0.7" width="9.6" height="9.6" stroke="#d2d2d2" fill="none" stroke-width="1.2"/><path d="M1 1 L10 10 M10 1 L1 10" stroke="#d2d2d2" stroke-width="1"/></svg>
<svg style="left:8px;top:172px" width="10" height="12" viewBox="0 0 10 12"><path d="M1 11 L2 8 L6.5 3.5 L8 5 L3.5 9.5 Z" stroke="#d2d2d2" fill="none" stroke-width="1.1"/><path d="M6 2 L7.5 0.5 Q9.5 0.5 9.5 2.5 L8 4 Z" fill="#d2d2d2"/></svg>
<div class="a" style="left:19px;top:182px;width:2px;height:2px;background:#9a9a9a"></div>
<svg style="left:8px;top:190px" width="11" height="11" viewBox="0 0 11 11"><path d="M1 7 L7 1 Q8 0 9.5 1.5 Q11 3 10 4 L4 10 Q3 11 1.5 9.5 Q0 8 1 7Z" fill="#d2d2d2"/><circle cx="5.5" cy="5.5" r="0.8" fill="#555"/><circle cx="4" cy="7" r="0.6" fill="#555"/><circle cx="7" cy="4" r="0.6" fill="#555"/></svg>
<div class="a" style="left:19px;top:200px;width:2px;height:2px;background:#9a9a9a"></div>
<svg style="left:8px;top:208px" width="10" height="12" viewBox="0 0 10 12"><path d="M9.5 0.5 L4.5 7" stroke="#d2d2d2" stroke-width="1.3"/><path d="M4 6.5 Q1.5 7 1.5 9 L0.5 11.5 Q3.5 11 5 9 Z" fill="#d2d2d2"/></svg>
<div class="a" style="left:19px;top:218px;width:2px;height:2px;background:#9a9a9a"></div>
<svg style="left:8px;top:226px" width="11" height="11" viewBox="0 0 11 11"><circle cx="5.5" cy="2.3" r="2.1" fill="#d2d2d2"/><rect x="4.5" y="3.5" width="2" height="3" fill="#d2d2d2"/><path d="M0.5 9 Q0.5 6.5 3 6.5 H8 Q10.5 6.5 10.5 9 Z" fill="#d2d2d2"/><rect x="0.5" y="9.7" width="10" height="1.2" fill="#d2d2d2"/></svg>
<div class="a" style="left:19px;top:236px;width:2px;height:2px;background:#9a9a9a"></div>
<svg style="left:7px;top:245px" width="11" height="11" viewBox="0 0 11 11"><path d="M10.5 0.5 L5.5 6" stroke="#d2d2d2" stroke-width="1.2"/><path d="M5 5.5 Q2.5 6 2.5 8 L1.5 10.5 Q4.5 10 6 8 Z" fill="#d2d2d2"/><path d="M1 2 Q3 0.5 5 2" stroke="#d2d2d2" fill="none"/><path d="M1 0.5 V2.5 H3" stroke="#d2d2d2" fill="none" stroke-width="0.8"/></svg>
<div class="a" style="left:19px;top:254px;width:2px;height:2px;background:#9a9a9a"></div>
<svg style="left:8px;top:262px" width="11" height="11" viewBox="0 0 11 11"><path d="M0.5 6.5 L6 1 L10 5 L5 10 H2.5 Z" fill="#d2d2d2"/><path d="M3 4 L7 8" stroke="#555"/><path d="M2 10.5 H10" stroke="#d2d2d2" stroke-width="0.8"/></svg>
<div class="a" style="left:19px;top:272px;width:2px;height:2px;background:#9a9a9a"></div>
<svg style="left:7px;top:280px" width="11" height="11" viewBox="0 0 11 11"><defs><linearGradient id="gg" x1="0" y1="0" x2="1" y2="0"><stop offset="0" stop-color="#333"/><stop offset="1" stop-color="#ddd"/></linearGradient></defs><rect x="0.6" y="0.6" width="9.8" height="9.8" fill="url(#gg)" stroke="#d2d2d2" stroke-width="1.1"/></svg>
<div class="a" style="left:19px;top:290px;width:2px;height:2px;background:#9a9a9a"></div>
<svg style="left:9px;top:297px" width="8" height="12" viewBox="0 0 8 12"><path d="M4 0.5 Q7.5 5 7.5 8 Q7.5 11.5 4 11.5 Q0.5 11.5 0.5 8 Q0.5 5 4 0.5Z" fill="#d2d2d2"/><circle cx="3.7" cy="8" r="1.3" fill="#aaa"/></svg>
<div class="a" style="left:19px;top:308px;width:2px;height:2px;background:#9a9a9a"></div>
<svg style="left:7px;top:318px" width="11" height="12" viewBox="0 0 11 12"><circle cx="6.5" cy="4.5" r="3.8" fill="#d2d2d2"/><circle cx="6.5" cy="4.5" r="1.8" fill="#555"/><path d="M4 7 L0.8 10.5" stroke="#d2d2d2" stroke-width="1.6"/></svg>
<div class="a" style="left:19px;top:328px;width:2px;height:2px;background:#9a9a9a"></div>
<svg style="left:8px;top:336px" width="11" height="11" viewBox="0 0 11 11"><path d="M1 10 L2 5 L6.5 1 L10 4.5 L6 9 Z" stroke="#d2d2d2" fill="none" stroke-width="1.2"/><path d="M1 10 L4.5 6.5" stroke="#d2d2d2"/><circle cx="5" cy="6" r="0.9" fill="#d2d2d2"/></svg>
<div class="a" style="left:19px;top:346px;width:2px;height:2px;background:#9a9a9a"></div>
<svg style="left:9px;top:354px" width="9" height="10" viewBox="0 0 9 10"><path d="M0.7 2.5 V0.7 H8.3 V2.5 M4.5 0.7 V9.3 M2.8 9.3 H6.2" stroke="#d2d2d2" fill="none" stroke-width="1.4"/></svg>
<div class="a" style="left:19px;top:363px;width:2px;height:2px;background:#9a9a9a"></div>
<svg style="left:9px;top:371px" width="8" height="12" viewBox="0 0 8 12"><path d="M0.5 0.5 L7.5 7 L4.5 7 L6 11 L4.5 11.5 L3 7.5 L0.5 10 Z" fill="#d2d2d2"/></svg>
<div class="a" style="left:19px;top:382px;width:2px;height:2px;background:#9a9a9a"></div>
<svg style="left:7px;top:390px" width="12" height="10" viewBox="0 0 12 10"><rect x="0.7" y="0.7" width="10.6" height="8.6" stroke="#d2d2d2" fill="#666" stroke-width="1.2"/></svg>
<div class="a" style="left:19px;top:399px;width:2px;height:2px;background:#9a9a9a"></div>
<svg style="left:8px;top:405px" width="11" height="13" viewBox="0 0 11 13"><path d="M2 6 V3 Q2 2 3 2 Q4 2 4 3 V1.5 Q4 0.5 5 0.5 Q6 0.5 6 1.5 V2 Q6 1 7 1 Q8 1 8 2 V3.5 Q8 2.5 9 2.5 Q10 2.5 10 3.5 V8 Q10 12.5 5.5 12.5 Q2 12.5 1 9 L0.5 6.5 Q0.5 5.5 1.3 5.5 Q2 5.5 2 6Z" fill="#d2d2d2"/><path d="M4 4 V7 M6 3 V7 M8 4 V7" stroke="#666" stroke-width="0.6"/></svg>
<div class="a" style="left:20px;top:408px;width:2px;height:2px;background:#9a9a9a"></div>
<svg style="left:7px;top:425px" width="11" height="12" viewBox="0 0 11 12"><circle cx="4.5" cy="4.5" r="3.6" stroke="#d2d2d2" fill="none" stroke-width="1.3"/><path d="M7 7 L10.5 11" stroke="#d2d2d2" stroke-width="1.6"/></svg>
<svg style="left:7px;top:447px" width="12" height="4" viewBox="0 0 12 4"><circle cx="1.7" cy="2" r="1.4" fill="#d2d2d2"/><circle cx="6" cy="2" r="1.4" fill="#d2d2d2"/><circle cx="10.3" cy="2" r="1.4" fill="#d2d2d2"/></svg>
<div class="a" style="left:19px;top:455px;width:2px;height:2px;background:#9a9a9a"></div>
<div class="a" style="left:6px;top:460px;width:4px;height:4px;background:#eee;border:0.5px solid #666"></div>
<div class="a" style="left:4px;top:458px;width:4px;height:4px;background:#111;border:0.5px solid #ccc"></div>
<svg style="left:14px;top:458px" width="6" height="9" viewBox="0 0 6 9"><path d="M1 1 H4.5 V7" stroke="#d2d2d2" fill="none" stroke-width="0.9"/><path d="M0 1 L1.8 0 V2Z M4.5 8.5 L3.5 6.5 H5.5Z" fill="#d2d2d2"/></svg>
<div class="a" style="left:9px;top:481px;width:11px;height:12px;background:#fafafa;border:1px solid #777"></div>
<div class="a" style="left:3px;top:474px;width:11px;height:12px;background:#fafafa;border:1px solid #888"></div>
<svg style="left:7px;top:501px" width="12" height="10" viewBox="0 0 12 10"><rect x="0.6" y="0.6" width="10.8" height="8.8" stroke="#d2d2d2" fill="none" stroke-width="1.1"/><circle cx="6" cy="5" r="2.4" stroke="#bbb" fill="none" stroke-width="1"/></svg>
<svg style="left:7px;top:519px" width="12" height="10" viewBox="0 0 12 10"><rect x="3.5" y="0.6" width="7.9" height="6" stroke="#d2d2d2" fill="none" stroke-width="1.1"/><rect x="0.6" y="3" width="7.9" height="6.4" stroke="#d2d2d2" fill="#4d4d4d" stroke-width="1.1"/></svg>
<div class="a" style="left:19px;top:528px;width:2px;height:2px;background:#9a9a9a"></div>

<!-- RIGHT COLUMNS -->
<div class="a" style="left:859px;top:41px;width:11px;height:679px;background:#4a4a4a"></div>
<div class="a" style="left:870px;top:41px;width:26px;height:679px;background:#4a4a4a"></div>
<div class="a" style="left:870px;top:40px;width:210px;height:8px;background:#3f3f3f"></div>


<div class="a" style="left:868px;top:48px;width:2px;height:672px;background:#3e3e3e"></div>
<div class="a" style="left:894px;top:48px;width:2px;height:672px;background:#3e3e3e"></div>
<div class="a" style="left:870px;top:48px;width:24px;height:672px;background:#4c4c4c"></div>
<div class="a" style="left:870px;top:49px;width:24px;height:48px;background:#525252;border-top:1px solid #5c5c5c;border-bottom:1px solid #3c3c3c"></div>
<div class="a" style="left:877px;top:52px;width:11px;height:1px;background:#666"></div>
<div class="a" style="left:870px;top:100px;width:24px;height:44px;background:#525252;border-top:1px solid #5c5c5c;border-bottom:1px solid #3c3c3c"></div>
<div class="a" style="left:877px;top:102px;width:11px;height:1px;background:#666"></div>
<div class="a" style="left:870px;top:146px;width:24px;height:29px;background:#525252;border-top:1px solid #5c5c5c;border-bottom:1px solid #3c3c3c"></div>
<div class="a" style="left:877px;top:148px;width:11px;height:1px;background:#666"></div>
<div class="a" style="left:870px;top:177px;width:24px;height:25px;background:#525252;border-top:1px solid #5c5c5c;border-bottom:1px solid #3c3c3c"></div>
<div class="a" style="left:877px;top:179px;width:11px;height:1px;background:#666"></div>
<div class="t" style="left:886px;top:41px;font-size:7px;color:#ccc">»</div>
<svg style="left:876px;top:59px" width="14" height="12" viewBox="0 0 14 12"><path d="M0.5 1 H5 M0.5 3.5 H5 M0.5 6 H4" stroke="#d8d8d8" stroke-width="0.9"/><path d="M13 0.5 L7 7" stroke="#d8d8d8" stroke-width="1.5"/><path d="M6.5 6.5 Q4 7 4 9 L3 11.5 Q6.5 11 7.5 8.5 Z" fill="#d8d8d8"/></svg>
<svg style="left:876px;top:78px" width="14" height="11" viewBox="0 0 14 11"><path d="M0.5 2.5 H13 M0.5 8 H13" stroke="#d8d8d8" stroke-width="1"/><circle cx="4" cy="2.5" r="2.2" fill="#d8d8d8"/><path d="M10.5 5.5 L13 8 L10.5 10.5 L8 8 Z" fill="#d8d8d8"/></svg>
<div class="t" style="left:877px;top:107px;font-size:12px;color:#d8d8d8">A</div><div class="a" style="left:886px;top:106px;width:1px;height:13px;background:#d8d8d8"></div>
<div class="t" style="left:877px;top:126px;font-size:11px;font-weight:bold;color:#d8d8d8">¶</div>
<div class="t" style="left:876px;top:154px;font-size:12px;font-style:italic;font-family:Liberation Serif;color:#d8d8d8">A</div>
<svg style="left:877px;top:182px" width="11" height="12" viewBox="0 0 11 12"><path d="M5.5 0.7 L10.3 3.2 V8.8 L5.5 11.3 L0.7 8.8 V3.2 Z M0.7 3.2 L5.5 5.7 L10.3 3.2 M5.5 5.7 V11.3" stroke="#bbb" fill="none" stroke-width="1"/></svg>
<div class="a" style="left:896px;top:48px;width:179px;height:672px;background:#535353"></div>
<div class="a" style="left:1075px;top:48px;width:5px;height:672px;background:#474747"></div>
<div class="a" style="left:896px;top:48px;width:179px;height:20px;background:#424242"></div>
<div class="t" style="left:901px;top:55px;font-size:6.3px;color:#a8a8a8">Swatc</div>
<div class="t" style="left:924px;top:55px;font-size:6.3px;color:#a8a8a8">Gradi</div>
<div class="t" style="left:946px;top:55px;font-size:6.3px;color:#a8a8a8">Patter</div>
<div class="t" style="left:969px;top:55px;font-size:6.3px;color:#a8a8a8">Histor</div>
<div class="t" style="left:992px;top:55px;font-size:6.3px;color:#a8a8a8">Actio</div>
<div class="a" style="left:920px;top:50px;width:1px;height:16px;background:#3a3a3a"></div>
<div class="a" style="left:942px;top:50px;width:1px;height:16px;background:#3a3a3a"></div>
<div class="a" style="left:965px;top:50px;width:1px;height:16px;background:#3a3a3a"></div>
<div class="a" style="left:988px;top:50px;width:1px;height:16px;background:#3a3a3a"></div>
<div class="a" style="left:1010px;top:49px;width:39px;height:19px;background:#535353"></div>
<div class="t" style="left:1014px;top:55px;font-size:6.3px;font-weight:bold;color:#f0f0f0">Properties</div>
<svg style="left:1066px;top:55px" width="7" height="6" viewBox="0 0 7 6"><path d="M0 1.5 H7 M0 4.5 H7" stroke="#bbb" stroke-width="1.2"/></svg>
<div class="t" style="left:1067px;top:41px;font-size:7px;color:#ccc">»</div>
<div class="a" style="left:903px;top:73px;width:13px;height:15px;background:#383838"></div>
<svg style="left:906px;top:75px" width="8" height="11" viewBox="0 0 8 11"><path d="M0.6 0.6 H5 L7.4 3 V10.4 H0.6 Z" stroke="#ddd" fill="none" stroke-width="1"/><path d="M4.6 0.6 V3.4 H7.4" stroke="#ddd" fill="none" stroke-width="0.9"/></svg>
<div class="t" style="left:920px;top:79px;font-size:6.5px;color:#dcdcdc">Document</div>
<div class="a" style="left:898px;top:92px;width:168px;height:1px;background:#454545"></div>
<div class="a" style="left:1066px;top:93px;width:9px;height:290px;background:#4a4a4a"></div>
<div class="a" style="left:1067px;top:104px;width:7px;height:222px;background:#5e5e5e"></div>
<svg style="left:1067px;top:97px" width="7" height="5" viewBox="0 0 7 5"><path d="M1 4 L3.5 1.5 L6 4" stroke="#888" fill="none"/></svg>
<svg style="left:1067px;top:359px" width="7" height="5" viewBox="0 0 7 5"><path d="M1 1 L3.5 3.5 L6 1" stroke="#888" fill="none"/></svg>
<svg style="left:900px;top:101px" width="6" height="4" viewBox="0 0 6 4"><path d="M0.5 0.5 L3 3 L5.5 0.5" stroke="#9a9a9a" fill="none" stroke-width="0.9"/></svg>
<div class="t" style="left:910px;top:99px;font-size:6.6px;font-weight:bold;color:#e4e4e4">Canvas</div>
<svg style="left:907px;top:123px" width="7" height="12" viewBox="0 0 7 12"><rect x="1" y="0.8" width="5" height="4.4" rx="2.2" stroke="#bbb" fill="none" stroke-width="1.1"/><rect x="1" y="6.8" width="5" height="4.4" rx="2.2" stroke="#bbb" fill="none" stroke-width="1.1"/><path d="M3.5 4 V8" stroke="#bbb"/></svg>
<div class="t" style="left:928px;top:117px;font-size:6.6px;color:#bdbdbd">W</div>
<div class="a" style="left:938px;top:115px;width:32px;height:10px;background:#454545"></div>
<div class="t" style="left:941px;top:117px;font-size:6.3px;color:#e0e0e0">2232 px</div>
<div class="t" style="left:980px;top:117px;font-size:6.6px;color:#8a8a8a">X</div>
<div class="a" style="left:988px;top:115px;width:33px;height:10px;background:#4c4c4c"></div>
<div class="t" style="left:991px;top:117px;font-size:6.3px;color:#6a6a6a">0 px</div>
<div class="t" style="left:929px;top:134px;font-size:6.6px;color:#bdbdbd">H</div>
<div class="a" style="left:938px;top:132px;width:32px;height:10px;background:#454545"></div>
<div class="t" style="left:941px;top:134px;font-size:6.3px;color:#e0e0e0">2854 px</div>
<div class="t" style="left:980px;top:134px;font-size:6.6px;color:#8a8a8a">Y</div>
<div class="a" style="left:988px;top:132px;width:33px;height:10px;background:#4c4c4c"></div>
<div class="t" style="left:991px;top:134px;font-size:6.3px;color:#6a6a6a">0 px</div>
<div class="a" style="left:939px;top:151px;width:13px;height:16px;background:#363636;border:1px solid #444"></div>
<svg style="left:942px;top:154px" width="7" height="10" viewBox="0 0 7 10"><rect x="0.5" y="0.5" width="6" height="9" stroke="#ccc" fill="none" stroke-width="0.8"/><circle cx="3.5" cy="3.5" r="1.3" fill="#ddd"/><path d="M1.2 9 Q1.2 5.5 3.5 5.5 Q5.8 5.5 5.8 9Z" fill="#ddd"/></svg>
<svg style="left:956px;top:154px" width="12" height="10" viewBox="0 0 12 10"><rect x="0.5" y="0.5" width="11" height="9" stroke="#ccc" fill="none" stroke-width="0.8"/><circle cx="6" cy="3.6" r="1.4" fill="#ddd"/><path d="M3 9 Q3 5.6 6 5.6 Q9 5.6 9 9Z" fill="#ddd"/></svg>
<div class="t" style="left:939px;top:177px;font-size:6.3px;color:#d0d0d0">Resolution: 250 pixels/inch</div>
<div class="t" style="left:918px;top:194px;font-size:6.6px;color:#c8c8c8">Mode</div>
<div class="a" style="left:939px;top:192px;width:82px;height:13px;background:#434343"></div><div class="t" style="left:943px;top:195.2px;font-size:6.3px;color:#dcdcdc">RGB Color</div><svg style="left:1014px;top:197px" width="6" height="4" viewBox="0 0 6 4"><path d="M0.5 0.5 L3 3 L5.5 0.5" stroke="#9a9a9a" fill="none" stroke-width="0.9"/></svg>
<div class="a" style="left:939px;top:209px;width:82px;height:14px;background:#434343"></div><div class="t" style="left:943px;top:212.7px;font-size:6.3px;color:#dcdcdc">16 Bits/Channel</div><svg style="left:1014px;top:215px" width="6" height="4" viewBox="0 0 6 4"><path d="M0.5 0.5 L3 3 L5.5 0.5" stroke="#9a9a9a" fill="none" stroke-width="0.9"/></svg>
<div class="t" style="left:926px;top:231px;font-size:6.6px;color:#c8c8c8">Fill</div>
<div class="a" style="left:939px;top:229px;width:11px;height:11px;background:#4a4a4a;border:1px solid #444"></div>
<div class="a" style="left:953px;top:229px;width:68px;height:12px;background:#434343"></div><div class="t" style="left:957px;top:231.7px;font-size:6.3px;color:#dcdcdc">Transparent</div><svg style="left:1014px;top:234px" width="6" height="4" viewBox="0 0 6 4"><path d="M0.5 0.5 L3 3 L5.5 0.5" stroke="#9a9a9a" fill="none" stroke-width="0.9"/></svg>
<div class="a" style="left:898px;top:246px;width:168px;height:1px;background:#464646"></div>
<svg style="left:900px;top:256px" width="6" height="4" viewBox="0 0 6 4"><path d="M0.5 0.5 L3 3 L5.5 0.5" stroke="#9a9a9a" fill="none" stroke-width="0.9"/></svg>
<div class="t" style="left:911px;top:254px;font-size:6.6px;font-weight:bold;color:#e4e4e4">Rulers &amp; Grids</div>
<div class="a" style="left:903px;top:270px;width:15px;height:17px;background:#363636"></div>
<svg style="left:906px;top:273px" width="9" height="11" viewBox="0 0 9 11"><path d="M1 11 V1 H9" stroke="#ddd" fill="none" stroke-width="2"/><path d="M3 1 V2.5 M5 1 V2.5 M7 1 V2.5" stroke="#ddd"/></svg>
<svg style="left:925px;top:273px" width="11" height="11" viewBox="0 0 11 11"><path d="M0.5 0.5 H10.5 V10.5 H0.5 Z M3.8 0.5 V10.5 M7.2 0.5 V10.5 M0.5 3.8 H10.5 M0.5 7.2 H10.5" stroke="#ccc" fill="none" stroke-width="0.9"/></svg>
<svg style="left:946px;top:273px" width="10" height="11" viewBox="0 0 10 11"><rect x="0.5" y="0.5" width="9" height="10" stroke="#bbb" fill="none" stroke-width="0.9"/><path d="M2 2 H8 M2 4 H8 M2 6 H8 M2 8 H8" stroke="#888" stroke-width="0.6" stroke-dasharray="1 1"/></svg>
<div class="a" style="left:975px;top:272px;width:46px;height:13px;background:#434343"></div><div class="t" style="left:979px;top:275.2px;font-size:6.3px;color:#dcdcdc">Pixels</div><svg style="left:1014px;top:277px" width="6" height="4" viewBox="0 0 6 4"><path d="M0.5 0.5 L3 3 L5.5 0.5" stroke="#9a9a9a" fill="none" stroke-width="0.9"/></svg>
<div class="a" style="left:898px;top:293px;width:168px;height:1px;background:#464646"></div>
<svg style="left:900px;top:303px" width="6" height="4" viewBox="0 0 6 4"><path d="M0.5 0.5 L3 3 L5.5 0.5" stroke="#9a9a9a" fill="none" stroke-width="0.9"/></svg>
<div class="t" style="left:911px;top:302px;font-size:6.6px;font-weight:bold;color:#e4e4e4">Guides</div>
<div class="a" style="left:903px;top:317px;width:15px;height:16px;background:#363636"></div>
<svg style="left:905px;top:319px" width="11" height="12" viewBox="0 0 11 12"><path d="M3.5 0 V12 M7.5 0 V12 M0 4.5 H11" stroke="#ddd" fill="none" stroke-width="1"/></svg>
<svg style="left:925px;top:319px" width="12" height="12" viewBox="0 0 12 12"><path d="M2.5 0 V12 M5.5 0 V12 M0 4.5 H8" stroke="#ccc" fill="none" stroke-width="1"/><rect x="7" y="7" width="5" height="5" fill="#ccc"/></svg>
<div class="a" style="left:944px;top:317px;width:15px;height:16px;background:#363636"></div>
<svg style="left:946px;top:319px" width="11" height="12" viewBox="0 0 11 12"><path d="M3 0 V12 M0 4 L3 2 M0 4 H11" stroke="#ddd" fill="none" stroke-width="1"/><rect x="6.5" y="6" width="3.5" height="5" fill="#ddd"/></svg>
<div class="a" style="left:975px;top:320px;width:46px;height:13px;background:#434343"></div>
<div class="a" style="left:979px;top:326px;width:29px;height:1px;background:#ddd"></div>
<svg style="left:1014px;top:325px" width="6" height="4" viewBox="0 0 6 4"><path d="M0.5 0.5 L3 3 L5.5 0.5" stroke="#9a9a9a" fill="none" stroke-width="0.9"/></svg>
<div class="a" style="left:898px;top:341px;width:168px;height:1px;background:#464646"></div>
<svg style="left:900px;top:351px" width="6" height="4" viewBox="0 0 6 4"><path d="M0.5 0.5 L3 3 L5.5 0.5" stroke="#9a9a9a" fill="none" stroke-width="0.9"/></svg>
<div class="t" style="left:911px;top:349px;font-size:6.6px;font-weight:bold;color:#e4e4e4">Quick Actions</div>
<div class="a" style="left:896px;top:383px;width:179px;height:4px;background:#3d3d3d"></div>
<div class="a" style="left:896px;top:387px;width:179px;height:19px;background:#424242"></div>
<div class="a" style="left:896px;top:387px;width:30px;height:19px;background:#535353"></div>
<div class="t" style="left:901px;top:393px;font-size:6.3px;font-weight:bold;color:#eeeeee">Layers</div>
<svg style="left:1066px;top:393px" width="7" height="6" viewBox="0 0 7 6"><path d="M0 1.5 H7 M0 4.5 H7" stroke="#bbb" stroke-width="1.2"/></svg>
<div class="a" style="left:899px;top:413px;width:53px;height:12px;background:#404040"></div>
<svg style="left:902px;top:415px" width="8" height="8" viewBox="0 0 8 8"><circle cx="3.2" cy="3.2" r="2.3" stroke="#ddd" fill="none" stroke-width="1.1"/><path d="M5 5 L7.5 7.5" stroke="#ddd" stroke-width="1.3"/></svg>
<div class="t" style="left:911px;top:416px;font-size:6.3px;color:#dcdcdc">Kind</div>
<svg style="left:944px;top:418px" width="6" height="4" viewBox="0 0 6 4"><path d="M0.5 0.5 L3 3 L5.5 0.5" stroke="#9a9a9a" fill="none" stroke-width="0.9"/></svg>
<svg style="left:959px;top:415px" width="9" height="8" viewBox="0 0 9 8"><rect x="0.5" y="0.5" width="8" height="7" stroke="#ccc" fill="none"/><path d="M2 6 L4 3.5 L5.5 5 L7 3 V6 Z" fill="#ccc"/></svg>
<svg style="left:974px;top:415px" width="9" height="9" viewBox="0 0 9 9"><circle cx="4.5" cy="4.5" r="3.8" stroke="#ccc" fill="none" stroke-width="1"/><path d="M4.5 0.7 A3.8 3.8 0 0 1 4.5 8.3 Z" fill="#ccc"/></svg>
<svg style="left:989px;top:415px" width="9" height="9" viewBox="0 0 9 9"><path d="M0.7 2.5 V0.7 H8.3 V2.5 M4.5 0.7 V8.3 M3 8.3 H6" stroke="#ccc" fill="none" stroke-width="1.2"/></svg>
<svg style="left:1004px;top:415px" width="9" height="9" viewBox="0 0 9 9"><rect x="1.5" y="1.5" width="6" height="6" stroke="#ccc" fill="none"/><path d="M0 1.5 H9 M0 7.5 H9 M1.5 0 V9 M7.5 0 V9" stroke="#ccc" stroke-width="0.5"/></svg>
<svg style="left:1020px;top:414px" width="8" height="10" viewBox="0 0 8 10"><path d="M0.5 0.5 H5 L7.5 3 V9.5 H0.5Z" fill="#ddd"/><rect x="3" y="5" width="3.5" height="3.5" fill="#666"/></svg>
<div class="a" style="left:1034px;top:414px;width:6px;height:6px;border-radius:50%;background:#e8e8e8"></div>
<div class="a" style="left:1036px;top:420px;width:2px;height:4px;background:#555"></div>
<div class="a" style="left:898px;top:429px;width:168px;height:1px;background:#474747"></div>
<div class="a" style="left:899px;top:434px;width:78px;height:11px;background:#4d4d4d"></div>
<div class="t" style="left:903px;top:437px;font-size:6.3px;color:#707070">Normal</div>
<svg style="left:970px;top:439px" width="6" height="4" viewBox="0 0 6 4"><path d="M0.5 0.5 L3 3 L5.5 0.5" stroke="#666" fill="none" stroke-width="0.9"/></svg>
<div class="t" style="left:982px;top:437px;font-size:6.3px;color:#707070">Opacity:</div>
<div class="a" style="left:1009px;top:434px;width:21px;height:11px;background:#4d4d4d"></div>
<div class="t" style="left:1011px;top:437px;font-size:6.3px;color:#6a6a6a">100%</div>
<svg style="left:1033px;top:439px" width="6" height="4" viewBox="0 0 6 4"><path d="M0.5 0.5 L3 3 L5.5 0.5" stroke="#666" fill="none" stroke-width="0.9"/></svg>
<div class="a" style="left:898px;top:448px;width:168px;height:1px;background:#474747"></div>
<div class="t" style="left:899px;top:456px;font-size:6.3px;color:#777">Lock:</div>
<svg style="left:920px;top:454px" width="9" height="9" viewBox="0 0 9 9"><path d="M0 0 H3 V3 H0Z M6 0 H9 V3 H6Z M3 3 H6 V6 H3Z M0 6 H3 V9 H0Z M6 6 H9 V9 H6Z" fill="#8a8a8a"/></svg>
<svg style="left:934px;top:453px" width="8" height="11" viewBox="0 0 8 11"><path d="M7.5 0.5 L3 7" stroke="#8a8a8a" stroke-width="1.2"/><path d="M2.5 6.5 Q0.5 7 0.5 10.5 Q3 10 3.5 8Z" fill="#8a8a8a"/></svg>
<svg style="left:947px;top:453px" width="10" height="10" viewBox="0 0 10 10"><path d="M5 0.5 V9.5 M0.5 5 H9.5" stroke="#8a8a8a"/><path d="M5 0 L3.5 2 H6.5Z M5 10 L3.5 8 H6.5Z M0 5 L2 3.5 V6.5Z M10 5 L8 3.5 V6.5Z" fill="#8a8a8a"/></svg>
<svg style="left:960px;top:454px" width="10" height="9" viewBox="0 0 10 9"><path d="M2.5 0 V6.5 H10 M0 2.5 H7.5 V9" stroke="#8a8a8a" fill="none"/></svg>
<svg style="left:975px;top:453px" width="8" height="10" viewBox="0 0 8 10"><path d="M2 4.5 V3 Q2 0.8 4 0.8 Q6 0.8 6 3 V4.5" stroke="#8a8a8a" fill="none" stroke-width="1.1"/><rect x="0.8" y="4.5" width="6.4" height="5" fill="#8a8a8a"/></svg>
<div class="t" style="left:997px;top:456px;font-size:6.3px;color:#777">Fill:</div>
<div class="a" style="left:1009px;top:453px;width:21px;height:11px;background:#4d4d4d"></div>
<div class="t" style="left:1011px;top:456px;font-size:6.3px;color:#6a6a6a">100%</div>
<svg style="left:1033px;top:458px" width="6" height="4" viewBox="0 0 6 4"><path d="M0.5 0.5 L3 3 L5.5 0.5" stroke="#666" fill="none" stroke-width="0.9"/></svg>
<div class="a" style="left:898px;top:466px;width:168px;height:1px;background:#474747"></div>
<div class="a" style="left:898px;top:486px;width:168px;height:1px;background:#4a4a4a"></div>
<div class="a" style="left:898px;top:515px;width:168px;height:1px;background:#4a4a4a"></div>
<div class="a" style="left:898px;top:544px;width:168px;height:1px;background:#4a4a4a"></div>
<div class="a" style="left:898px;top:572px;width:168px;height:1px;background:#4a4a4a"></div>
<div class="a" style="left:898px;top:600px;width:168px;height:1px;background:#4a4a4a"></div>
<div class="a" style="left:898px;top:629px;width:168px;height:1px;background:#4a4a4a"></div>
<div class="a" style="left:898px;top:657px;width:168px;height:1px;background:#4a4a4a"></div>
<div class="a" style="left:898px;top:686px;width:168px;height:1px;background:#4a4a4a"></div>
<div class="a" style="left:914px;top:467px;width:1px;height:241px;background:#4d4d4d"></div>
<svg style="left:901.5px;top:476px" width="9" height="6" viewBox="0 0 9 6"><path d="M0.5 3 Q4.5 -1 8.5 3 Q4.5 7 0.5 3Z" stroke="#bdbdbd" fill="none" stroke-width="0.9"/><circle cx="4.5" cy="3" r="1.5" fill="#bdbdbd"/></svg>
<svg style="left:928px;top:477px" width="6" height="4" viewBox="0 0 6 4"><path d="M0.5 0.5 L3 3 L5.5 0.5" stroke="#bbb" fill="none" stroke-width="0.9"/></svg>
<svg style="left:935px;top:475.0px" width="9" height="8" viewBox="0 0 9 8"><path d="M0 1 H3.5 L4.5 2 H9 V8 H0Z" fill="#e0e0e0"/><path d="M0 3.5 H9" stroke="#888" stroke-width="0.6"/></svg>
<div class="t" style="left:951px;top:475.8px;font-size:6.3px;color:#e4e4e4">editle text</div>
<svg style="left:901.5px;top:498.5px" width="9" height="6" viewBox="0 0 9 6"><path d="M0.5 3 Q4.5 -1 8.5 3 Q4.5 7 0.5 3Z" stroke="#bdbdbd" fill="none" stroke-width="0.9"/><circle cx="4.5" cy="3" r="1.5" fill="#bdbdbd"/></svg>
<svg style="left:942px;top:496.5px" width="10" height="11" viewBox="0 0 10 11"><path d="M0.8 3 V0.9 H9.2 V3 M5 0.9 V10.2 M3 10.2 H7" stroke="#e6e6e6" fill="none" stroke-width="1.3"/></svg>
<div class="t" style="left:963px;top:498.3px;font-size:6.3px;color:#e4e4e4;letter-spacing:-0.2px">Layer 2</div>
<svg style="left:901.5px;top:527px" width="9" height="6" viewBox="0 0 9 6"><path d="M0.5 3 Q4.5 -1 8.5 3 Q4.5 7 0.5 3Z" stroke="#bdbdbd" fill="none" stroke-width="0.9"/><circle cx="4.5" cy="3" r="1.5" fill="#bdbdbd"/></svg>
<div class="a checker" style="left:938px;top:519px;width:16px;height:21px;background-size:4px 4px;border:1px solid #ddd"></div>
<div class="a" style="left:940px;top:522px;width:3px;height:3px;background:#b05050"></div>
<div class="t" style="left:959px;top:526.8px;font-size:6.3px;color:#e4e4e4">Layer 3</div>
<svg style="left:901.5px;top:555px" width="9" height="6" viewBox="0 0 9 6"><path d="M0.5 3 Q4.5 -1 8.5 3 Q4.5 7 0.5 3Z" stroke="#bdbdbd" fill="none" stroke-width="0.9"/><circle cx="4.5" cy="3" r="1.5" fill="#bdbdbd"/></svg>
<svg style="left:942px;top:553px" width="10" height="11" viewBox="0 0 10 11"><path d="M0.8 3 V0.9 H9.2 V3 M5 0.9 V10.2 M3 10.2 H7" stroke="#e6e6e6" fill="none" stroke-width="1.3"/></svg>
<div class="t" style="left:963px;top:554.8px;font-size:6.3px;color:#e4e4e4;letter-spacing:-0.2px">cilta0000000...&lt;&lt;&lt;&lt;&lt;&lt;&lt;&lt;&lt;0 d</div>
<div class="a" style="left:903px;top:583.5px;width:6px;height:7px;border:1px solid #5e5e5e"></div>
<svg style="left:942px;top:582px" width="10" height="11" viewBox="0 0 10 11"><path d="M0.8 3 V0.9 H9.2 V3 M5 0.9 V10.2 M3 10.2 H7" stroke="#e6e6e6" fill="none" stroke-width="1.3"/></svg>
<div class="t" style="left:963px;top:583.8px;font-size:6.3px;color:#e4e4e4;letter-spacing:-0.2px">1aa</div>
<svg style="left:901.5px;top:612.5px" width="9" height="6" viewBox="0 0 9 6"><path d="M0.5 3 Q4.5 -1 8.5 3 Q4.5 7 0.5 3Z" stroke="#bdbdbd" fill="none" stroke-width="0.9"/><circle cx="4.5" cy="3" r="1.5" fill="#bdbdbd"/></svg>
<svg style="left:942px;top:610.5px" width="10" height="11" viewBox="0 0 10 11"><path d="M0.8 3 V0.9 H9.2 V3 M5 0.9 V10.2 M3 10.2 H7" stroke="#e6e6e6" fill="none" stroke-width="1.3"/></svg>
<div class="t" style="left:963px;top:612.3px;font-size:6.3px;color:#e4e4e4;letter-spacing:-0.2px">169</div>
<svg style="left:901.5px;top:641px" width="9" height="6" viewBox="0 0 9 6"><path d="M0.5 3 Q4.5 -1 8.5 3 Q4.5 7 0.5 3Z" stroke="#bdbdbd" fill="none" stroke-width="0.9"/><circle cx="4.5" cy="3" r="1.5" fill="#bdbdbd"/></svg>
<svg style="left:942px;top:639px" width="10" height="11" viewBox="0 0 10 11"><path d="M0.8 3 V0.9 H9.2 V3 M5 0.9 V10.2 M3 10.2 H7" stroke="#e6e6e6" fill="none" stroke-width="1.3"/></svg>
<div class="t" style="left:963px;top:640.8px;font-size:6.3px;color:#e4e4e4;letter-spacing:-0.2px">m</div>
<svg style="left:901.5px;top:669px" width="9" height="6" viewBox="0 0 9 6"><path d="M0.5 3 Q4.5 -1 8.5 3 Q4.5 7 0.5 3Z" stroke="#bdbdbd" fill="none" stroke-width="0.9"/><circle cx="4.5" cy="3" r="1.5" fill="#bdbdbd"/></svg>
<svg style="left:942px;top:667px" width="10" height="11" viewBox="0 0 10 11"><path d="M0.8 3 V0.9 H9.2 V3 M5 0.9 V10.2 M3 10.2 H7" stroke="#e6e6e6" fill="none" stroke-width="1.3"/></svg>
<div class="t" style="left:963px;top:668.8px;font-size:6.3px;color:#e4e4e4;letter-spacing:-0.2px">125..</div>
<svg style="left:901.5px;top:697.5px" width="9" height="6" viewBox="0 0 9 6"><path d="M0.5 3 Q4.5 -1 8.5 3 Q4.5 7 0.5 3Z" stroke="#bdbdbd" fill="none" stroke-width="0.9"/><circle cx="4.5" cy="3" r="1.5" fill="#bdbdbd"/></svg>
<svg style="left:942px;top:695.5px" width="10" height="11" viewBox="0 0 10 11"><path d="M0.8 3 V0.9 H9.2 V3 M5 0.9 V10.2 M3 10.2 H7" stroke="#e6e6e6" fill="none" stroke-width="1.3"/></svg>
<div class="t" style="left:963px;top:697.3px;font-size:6.3px;color:#e4e4e4;letter-spacing:-0.2px">01.01.1990</div>
<div class="a" style="left:1066px;top:470px;width:9px;height:238px;background:#4a4a4a"></div>
<div class="a" style="left:1067px;top:482px;width:7px;height:75px;background:#5e5e5e"></div>
<svg style="left:1067px;top:474px" width="7" height="5" viewBox="0 0 7 5"><path d="M1 4 L3.5 1.5 L6 4" stroke="#888" fill="none"/></svg>
<div class="a" style="left:896px;top:706px;width:170px;height:1px;background:#4a4a4a"></div>
<svg style="left:948px;top:712px" width="10" height="7" viewBox="0 0 10 7"><rect x="0.5" y="1" width="5" height="5" rx="2.5" stroke="#777" fill="none"/><rect x="4.5" y="1" width="5" height="5" rx="2.5" stroke="#777" fill="none"/></svg>
<div class="t" style="left:966px;top:711px;font-size:8px;font-style:italic;font-family:Liberation Serif;color:#888">fx</div>
<svg style="left:981px;top:711px" width="11" height="9" viewBox="0 0 11 9"><rect x="0.5" y="0.5" width="10" height="8" fill="#c8c8c8"/><circle cx="5.5" cy="4.5" r="2.5" fill="#555"/></svg>
<svg style="left:999px;top:711px" width="9" height="9" viewBox="0 0 9 9"><circle cx="4.5" cy="4.5" r="3.8" stroke="#c8c8c8" fill="none" stroke-width="1.1"/><path d="M1.8 7.2 L7.2 1.8 A3.8 3.8 0 0 1 1.8 7.2Z" fill="#c8c8c8"/></svg>
<svg style="left:1015px;top:711px" width="10" height="9" viewBox="0 0 10 9"><path d="M0 1 H4 L5 2 H10 V9 H0Z" fill="#c8c8c8"/></svg>
<svg style="left:1033px;top:710px" width="9" height="10" viewBox="0 0 9 10"><rect x="0.5" y="0.5" width="8" height="9" stroke="#c8c8c8" fill="none"/><path d="M4.5 2.5 V7.5 M2 5 H7" stroke="#c8c8c8"/></svg>
<svg style="left:1050px;top:710px" width="8" height="10" viewBox="0 0 8 10"><path d="M0 1.5 H8 M3 0.5 H5" stroke="#777"/><path d="M1 2.5 H7 L6.5 9.5 H1.5Z" stroke="#777" fill="none"/></svg>

<!-- DOCUMENT -->
<div class="a checker" style="left:303.5px;top:187px;width:289px;height:410.8px"></div>
<div class="gv" style="left:323px;top:72px;height:639px"></div>
<div class="gv" style="left:571px;top:72px;height:639px"></div>
<div class="gh" style="left:36px;top:210px;width:823px"></div>
<div class="gh" style="left:36px;top:574px;width:823px"></div>
<!--PAGES-->
<div class="a" style="left:361.00px;top:236.00px;width:177.00px;height:248.00px;background:#fff;"></div>
<div class="a" style="left:368.50px;top:245.30px;width:29.00px;height:8px;white-space:nowrap;font-size:6.4px;line-height:8px;font-style:italic;color:#dc7428;transform:scaleX(0.86);-webkit-text-stroke:0.15px #dc7428;transform-origin:0 50%">Dynawatt</div>
<div class="a" style="left:396.00px;top:245.36px;width:18.00px;height:2.88px;overflow:hidden;white-space:nowrap;font-size:2.4px;line-height:2.88px;font-weight:normal;color:#444;text-align:left">payment government charges supply summary to in dynawatt balance your information taxes to messages current period and for tariff rate in reading for credit tariff to dynawatt adjust account government meter network network taxes government to adjust taxes supply to</div>
<div class="a" style="left:396.00px;top:247.76px;width:21.00px;height:2.88px;overflow:hidden;white-space:nowrap;font-size:2.4px;line-height:2.88px;font-weight:normal;color:#444;text-align:left">value meter and credit statement energy amount rate charges balance account adjust due credit dynawatt contract customer your taxes adjust network billing information your credit number in adjust to delivery period kwh contract balance tariff email payment month taxes levy</div>
<div class="a" style="left:396.00px;top:250.16px;width:18.00px;height:2.88px;overflow:hidden;white-space:nowrap;font-size:2.4px;line-height:2.88px;font-weight:normal;color:#444;text-align:left">month information due reading online customer date email reading for adjust due previous kwh notes please reference electricity amount fees value in account current rate service phone please charges levy kwh rate and added request in phone credit adjust online</div>
<div class="a" style="left:462.00px;top:241.50px;width:70.00px;height:15.00px;border:0.6px solid #555"></div>
<div class="a" style="left:462.00px;top:246.10px;width:70.00px;height:0.60px;background:#666;"></div>
<div class="a" style="left:466.50px;top:242.40px;width:18.50px;height:3.00px;overflow:hidden;white-space:nowrap;font-size:2.5px;line-height:3.00px;font-weight:normal;color:#333;text-align:left">notes dynawatt payment please date contact fees kwh taxes www month in com for government total usage date request in to reference date due summary adjust contract dynawatt electricity amount number details notes request contact of government month contact service</div>
<div class="a" style="left:520.00px;top:242.40px;width:10.00px;height:3.00px;overflow:hidden;white-space:nowrap;font-size:2.5px;line-height:3.00px;font-weight:normal;color:#444;text-align:left">Page 1/2</div>
<div class="a" style="left:466.50px;top:247.46px;width:20.50px;height:2.88px;overflow:hidden;white-space:nowrap;font-size:2.4px;line-height:2.88px;font-weight:normal;color:#444;text-align:left">delivery account kwh to period email amount energy address reading supply supply messages invoice kwh for service electricity supply credit total notes energy dynawatt tariff invoice credit total number rate contact contract notes details added meter charges for customer charges</div>
<div class="a" style="left:520.00px;top:247.46px;width:11.00px;height:2.88px;overflow:hidden;white-space:nowrap;font-size:2.4px;line-height:2.88px;font-weight:normal;color:#555;text-align:left">meter request meter the kwh com taxes customer consumption amount the charges rate balance information delivery adjust payment government energy date statement current government delivery summary contract address to month important invoice email government invoice contract www credit supply supply</div>
<div class="a" style="left:466.50px;top:250.46px;width:17.50px;height:2.88px;overflow:hidden;white-space:nowrap;font-size:2.4px;line-height:2.88px;font-weight:normal;color:#444;text-align:left">supply supply your usage network supply to billing in period electricity service account please fees to your the adjust charges balance your government information delivery of in invoice period delivery details charges network consumption added contact fees information usage account</div>
<div class="a" style="left:520.00px;top:250.46px;width:11.00px;height:2.88px;overflow:hidden;white-space:nowrap;font-size:2.4px;line-height:2.88px;font-weight:normal;color:#555;text-align:left">account statement kwh value month usage usage due for charges your address please address consumption usage com date service previous of period government government previous information charges date balance messages of phone previous due value summary invoice for date statement</div>
<div class="a" style="left:466.50px;top:253.06px;width:22.50px;height:2.88px;overflow:hidden;white-space:nowrap;font-size:2.4px;line-height:2.88px;font-weight:normal;color:#444;text-align:left">consumption previous information messages service contact email meter balance balance email current please network meter delivery www online phone statement billing www reading dynawatt supply address www meter billing previous kwh contact reference of of online total usage consumption billing</div>
<div class="a" style="left:520.00px;top:253.06px;width:11.00px;height:2.88px;overflow:hidden;white-space:nowrap;font-size:2.4px;line-height:2.88px;font-weight:normal;color:#555;text-align:left">date fees added contact electricity www levy reference contact added value information for meter your meter usage billing please period usage delivery important delivery com the usage messages summary contact www summary for com request account messages details online number</div>
<div class="a" style="left:369.00px;top:258.85px;width:164.00px;height:1.30px;background:#555;"></div>
<div class="a" style="left:451.05px;top:259.50px;width:0.90px;height:109.50px;background:#222;"></div>
<div class="a" style="left:369.20px;top:265.30px;width:71.10px;height:4.50px;background:#000;"></div>
<div class="a" style="left:371.00px;top:265.94px;width:22.00px;height:3.12px;overflow:hidden;white-space:nowrap;font-size:2.6px;line-height:3.12px;font-weight:normal;color:#fff;text-align:left">phone billing usage notes customer tariff online network please for www government value reference supply month supply address government for reference service service energy of charges taxes important month www summary charges delivery dynawatt fees value usage request levy contact</div>
<div class="a" style="left:424.50px;top:265.94px;width:14.50px;height:3.12px;overflow:hidden;white-space:nowrap;font-size:2.6px;line-height:3.12px;font-weight:normal;color:#fff;text-align:left">charges credit credit energy of the www value reference summary your previous address levy energy tariff invoice billing dynawatt invoice period of consumption period amount current reading phone taxes payment consumption balance rate com energy to messages address contact important</div>
<div class="a" style="left:369.20px;top:274.20px;width:71.10px;height:4.70px;background:#000;"></div>
<div class="a" style="left:371.00px;top:274.94px;width:27.00px;height:3.12px;overflow:hidden;white-space:nowrap;font-size:2.6px;line-height:3.12px;font-weight:normal;color:#fff;text-align:left">month request taxes dynawatt important previous rate dynawatt messages notes current energy balance charges previous current of invoice electricity email customer fees the email www charges customer charges usage delivery reference account credit to payment contract previous previous credit usage</div>
<div class="a" style="left:427.00px;top:274.94px;width:12.00px;height:3.12px;overflow:hidden;white-space:nowrap;font-size:2.6px;line-height:3.12px;font-weight:normal;color:#fff;text-align:left">online email your notes credit to reading billing total and email your current electricity credit of phone important messages in electricity payment delivery value current fees current billing date total electricity current balance www usage current government reading date previous</div>
<div class="a" style="left:371.00px;top:283.32px;width:17.00px;height:3.36px;overflow:hidden;white-space:nowrap;font-size:2.8px;line-height:3.36px;font-weight:normal;color:#4a4a4a;text-align:left">notes notes government levy consumption levy credit important government billing com electricity energy rate account supply electricity payment in request reading tariff in period request due online account important email charges government number summary request information charges consumption notes energy</div>
<div class="a" style="left:430.00px;top:283.32px;width:9.00px;height:3.36px;overflow:hidden;white-space:nowrap;font-size:2.8px;line-height:3.36px;font-weight:normal;color:#555;text-align:left">added month meter address government your supply notes kwh service request com meter service number tariff current supply please rate billing contact payment for reference information of please credit month electricity number of details please previous delivery amount current added</div>
<div class="a" style="left:371.00px;top:287.02px;width:22.00px;height:3.36px;overflow:hidden;white-space:nowrap;font-size:2.8px;line-height:3.36px;font-weight:normal;color:#4a4a4a;text-align:left">in account messages online meter value notes your for consumption total and important email customer total phone energy dynawatt tariff statement messages contract dynawatt government consumption supply charges balance messages current adjust kwh date payment for total to www date</div>
<div class="a" style="left:430.00px;top:287.02px;width:9.00px;height:3.36px;overflow:hidden;white-space:nowrap;font-size:2.8px;line-height:3.36px;font-weight:normal;color:#555;text-align:left">customer tariff important in total government of network for www consumption for fees statement meter in consumption invoice account month the please credit rate levy messages total delivery energy and previous number reading government account value service consumption to customer</div>
<div class="a" style="left:371.00px;top:290.02px;width:18.00px;height:3.36px;overflow:hidden;white-space:nowrap;font-size:2.8px;line-height:3.36px;font-weight:normal;color:#4a4a4a;text-align:left">billing levy due network due previous phone period amount electricity current contract customer total contact www of consumption and the of reference current credit value billing current usage reading levy electricity your request dynawatt summary tariff request kwh balance com</div>
<div class="a" style="left:433.00px;top:290.02px;width:6.00px;height:3.36px;overflow:hidden;white-space:nowrap;font-size:2.8px;line-height:3.36px;font-weight:normal;color:#555;text-align:left">notes supply value current due date period value meter please billing com notes number reference network energy supply contact value to com energy the in network address notes consumption tariff service to for request com details invoice current request value</div>
<div class="a" style="left:371.00px;top:293.32px;width:44.00px;height:3.36px;overflow:hidden;white-space:nowrap;font-size:2.8px;line-height:3.36px;font-weight:normal;color:#4a4a4a;text-align:left">amount fees reading date amount and month customer service total electricity the consumption information added please value credit payment reading and added notes due period contact customer the please details for usage total current summary billing reading current email the</div>
<div class="a" style="left:430.00px;top:293.32px;width:9.00px;height:3.36px;overflow:hidden;white-space:nowrap;font-size:2.8px;line-height:3.36px;font-weight:normal;color:#555;text-align:left">for consumption dynawatt for charges supply taxes and supply of due due network meter for taxes added previous statement phone charges request important number online notes fees details phone payment reference kwh charges amount reference delivery summary charges and dynawatt</div>
<div class="a" style="left:371.00px;top:297.02px;width:13.00px;height:3.36px;overflow:hidden;white-space:nowrap;font-size:2.8px;line-height:3.36px;font-weight:normal;color:#4a4a4a;text-align:left">com number important current network tariff reference date www current energy messages previous phone current adjust com dynawatt www of dynawatt contract taxes www important number contract added date summary meter for of and energy network information added your details</div>
<div class="a" style="left:430.00px;top:297.02px;width:9.00px;height:3.36px;overflow:hidden;white-space:nowrap;font-size:2.8px;line-height:3.36px;font-weight:normal;color:#555;text-align:left">com electricity credit to network of network balance contract reading kwh consumption the month www in address levy current important balance for request previous in address address usage consumption www in statement consumption reading reference phone period meter address summary</div>
<div class="a" style="left:418.00px;top:297.15px;width:23.00px;height:0.90px;background:#222;"></div>
<div class="a" style="left:371.00px;top:306.18px;width:61.00px;height:3.24px;overflow:hidden;white-space:nowrap;font-size:2.7px;line-height:3.24px;font-weight:normal;color:#555;text-align:left">value month kwh statement details in usage messages contract amount email and delivery network summary billing in fees charges please consumption summary address date due delivery adjust energy the usage to kwh total value contract your date period contract kwh</div>
<div class="a" style="left:369.20px;top:310.00px;width:71.10px;height:5.00px;background:#000;"></div>
<div class="a" style="left:371.00px;top:310.88px;width:34.00px;height:3.24px;overflow:hidden;white-space:nowrap;font-size:2.7px;line-height:3.24px;font-weight:normal;color:#fff;text-align:left">Current Month Charges</div>
<div class="a" style="left:371.00px;top:318.32px;width:52.00px;height:3.36px;overflow:hidden;white-space:nowrap;font-size:2.8px;line-height:3.36px;font-weight:normal;color:#4a4a4a;text-align:left">amount number previous amount month month month email account important credit billing due value for levy usage of amount month in dynawatt current added electricity total details period messages government levy period in taxes for charges address previous consumption government</div>
<div class="a" style="left:430.00px;top:318.32px;width:9.00px;height:3.36px;overflow:hidden;white-space:nowrap;font-size:2.8px;line-height:3.36px;font-weight:normal;color:#555;text-align:left">information energy fees dynawatt network current total notes account number information meter kwh important notes kwh supply of service the government kwh contract electricity supply due reference charges rate contact details payment account com please the payment phone please com</div>
<div class="a" style="left:371.00px;top:322.12px;width:23.00px;height:3.36px;overflow:hidden;white-space:nowrap;font-size:2.8px;line-height:3.36px;font-weight:normal;color:#4a4a4a;text-align:left">supply account government levy billing number the important address amount consumption information in supply details invoice taxes in information levy tariff phone total statement to total your to com request amount network levy charges reading value total tariff current payment</div>
<div class="a" style="left:433.00px;top:322.12px;width:6.00px;height:3.36px;overflow:hidden;white-space:nowrap;font-size:2.8px;line-height:3.36px;font-weight:normal;color:#555;text-align:left">billing email information online added tariff notes of www phone network supply messages notes government credit credit period reference for to levy reference rate electricity delivery phone energy summary invoice amount kwh to messages levy credit energy service usage rate</div>
<div class="a" style="left:371.00px;top:325.92px;width:44.00px;height:3.36px;overflow:hidden;white-space:nowrap;font-size:2.8px;line-height:3.36px;font-weight:normal;color:#4a4a4a;text-align:left">please amount due consumption address address value summary consumption supply summary reading due usage credit request supply account service summary service in period current important www kwh credit meter electricity messages please phone electricity tariff energy credit billing reading for</div>
<div class="a" style="left:433.00px;top:325.92px;width:6.00px;height:3.36px;overflow:hidden;white-space:nowrap;font-size:2.8px;line-height:3.36px;font-weight:normal;color:#555;text-align:left">customer please credit for payment reading information consumption www adjust billing notes of address invoice rate details rate address previous period details total please phone to kwh total adjust added information energy contract current previous network online invoice statement period</div>
<div class="a" style="left:371.00px;top:329.52px;width:18.00px;height:3.36px;overflow:hidden;white-space:nowrap;font-size:2.8px;line-height:3.36px;font-weight:normal;color:#4a4a4a;text-align:left">for total important reading details supply summary electricity tariff added due statement dynawatt invoice added of energy and tariff number phone important www usage added taxes kwh the in supply levy levy levy dynawatt previous statement month value electricity reading</div>
<div class="a" style="left:433.00px;top:329.52px;width:6.00px;height:3.36px;overflow:hidden;white-space:nowrap;font-size:2.8px;line-height:3.36px;font-weight:normal;color:#555;text-align:left">online your meter charges charges previous value contract your government dynawatt reference date summary statement phone important month for credit email and the online energy meter adjust messages and summary number due added energy network consumption previous network tariff date</div>
<div class="a" style="left:371.00px;top:333.12px;width:44.00px;height:3.36px;overflow:hidden;white-space:nowrap;font-size:2.8px;line-height:3.36px;font-weight:normal;color:#4a4a4a;text-align:left">phone account your in due previous government taxes billing details consumption meter online fees the the balance due month total added payment summary com notes reading usage previous reading credit reading of added rate number summary due to of billing</div>
<div class="a" style="left:430.00px;top:333.12px;width:9.00px;height:3.36px;overflow:hidden;white-space:nowrap;font-size:2.8px;line-height:3.36px;font-weight:normal;color:#555;text-align:left">kwh notes contract summary rate for consumption meter request tariff levy information meter kwh and date please number rate information contract supply billing the www amount address statement current in period kwh value billing due email dynawatt billing meter month</div>
<div class="a" style="left:456.00px;top:264.84px;width:54.50px;height:3.12px;overflow:hidden;white-space:nowrap;font-size:2.6px;line-height:3.12px;font-weight:bold;color:#333;text-align:left">meter consumption phone notes amount your government delivery kwh delivery customer important meter kwh rate messages request to government fees charges levy supply to period of value fees charges rate to number to customer supply electricity important number notes payment</div>
<div class="a" style="left:456.00px;top:271.88px;width:28.00px;height:3.24px;overflow:hidden;white-space:nowrap;font-size:2.7px;line-height:3.24px;font-weight:normal;color:#555;text-align:left">reference account for levy service please billing customer summary levy previous address month and due request reference details com information please electricity service your the for total for contact rate added notes account credit added phone period details contact email</div>
<div class="a" style="left:456.00px;top:278.04px;width:31.50px;height:3.12px;overflow:hidden;white-space:nowrap;font-size:2.6px;line-height:3.12px;font-weight:bold;color:#222;text-align:left">dynawatt due dynawatt www tariff for to number usage billing information balance messages electricity billing payment information address important usage of network rate reading www network email supply and details and month in www messages to consumption billing address in</div>
<div class="a" style="left:456.00px;top:280.50px;width:57.00px;height:0.60px;background:#555;"></div>
<div class="a" style="left:456.00px;top:282.28px;width:25.00px;height:3.24px;overflow:hidden;white-space:nowrap;font-size:2.7px;line-height:3.24px;font-weight:normal;color:#333;text-align:left">important fees please information total please added added delivery and consumption address number date payment levy total due the reference phone fees messages www network government government in of dynawatt meter your usage number added month added email details online</div>
<div class="a" style="left:456.00px;top:285.38px;width:46.00px;height:3.24px;overflow:hidden;white-space:nowrap;font-size:2.7px;line-height:3.24px;font-weight:normal;color:#333;text-align:left">consumption messages tariff dynawatt kwh energy levy kwh customer the www levy address due dynawatt date email charges fees reading payment invoice payment month information online online fees for current billing supply phone service reading rate in summary and usage</div>
<div class="a" style="left:456.00px;top:288.78px;width:38.00px;height:3.24px;overflow:hidden;white-space:nowrap;font-size:2.7px;line-height:3.24px;font-weight:normal;color:#333;text-align:left">credit balance payment service value tariff notes your in consumption delivery for period your rate kwh number value electricity customer meter energy rate month delivery important contract reading address balance statement email request phone account email com amount amount total</div>
<div class="a" style="left:456.00px;top:291.68px;width:30.00px;height:3.24px;overflow:hidden;white-space:nowrap;font-size:2.7px;line-height:3.24px;font-weight:normal;color:#333;text-align:left">adjust total information consumption address consumption billing electricity reading customer reading reading charges amount notes messages taxes billing payment in supply consumption reading current previous meter summary www your summary month and your the usage notes dynawatt meter com electricity</div>
<div class="a" style="left:456.00px;top:303.48px;width:57.00px;height:3.24px;overflow:hidden;white-space:nowrap;font-size:2.7px;line-height:3.24px;font-weight:normal;color:#444;text-align:left">messages information and notes amount meter account to billing fees value dynawatt taxes billing levy in information current invoice customer electricity fees consumption email email request government the your network fees number delivery contact period and information please charges and</div>
<div class="a" style="left:456.00px;top:306.68px;width:62.70px;height:3.24px;overflow:hidden;white-space:nowrap;font-size:2.7px;line-height:3.24px;font-weight:normal;color:#444;text-align:left">period consumption and fees reference summary messages period dynawatt the dynawatt payment rate contract information customer delivery due in period and online kwh credit usage in rate your online supply request credit charges network balance for summary service supply date</div>
<div class="a" style="left:456.00px;top:309.78px;width:51.00px;height:3.24px;overflow:hidden;white-space:nowrap;font-size:2.7px;line-height:3.24px;font-weight:normal;color:#444;text-align:left">total rate amount request due rate added to due address adjust notes contact rate rate of invoice email www information summary billing supply reference supply period government the tariff important service tariff account dynawatt for supply adjust notes information month</div>
<div class="a" style="left:456.00px;top:313.18px;width:59.00px;height:3.24px;overflow:hidden;white-space:nowrap;font-size:2.7px;line-height:3.24px;font-weight:normal;color:#444;text-align:left">email service energy the to credit charges summary www messages supply for adjust delivery levy information address current service charges contact amount service previous service levy in your details kwh phone www online added www billing due energy com government</div>
<div class="a" style="left:481.00px;top:321.94px;width:14.00px;height:3.12px;overflow:hidden;white-space:nowrap;font-size:2.6px;line-height:3.12px;font-weight:normal;color:#444;text-align:left">kWh Usage</div>
<div class="a" style="left:460.80px;top:328.00px;width:73.00px;height:30.80px;border:0.8px solid #333"></div>
<div class="a" style="left:461.50px;top:330.80px;width:71.50px;height:0.40px;background:#e6e6e6;"></div>
<div class="a" style="left:461.50px;top:333.80px;width:71.50px;height:0.40px;background:#e6e6e6;"></div>
<div class="a" style="left:461.50px;top:336.80px;width:71.50px;height:0.40px;background:#e6e6e6;"></div>
<div class="a" style="left:461.50px;top:342.80px;width:71.50px;height:0.40px;background:#e6e6e6;"></div>
<div class="a" style="left:461.50px;top:345.80px;width:71.50px;height:0.40px;background:#e6e6e6;"></div>
<div class="a" style="left:461.50px;top:348.80px;width:71.50px;height:0.40px;background:#e6e6e6;"></div>
<div class="a" style="left:461.50px;top:354.30px;width:71.50px;height:0.40px;background:#e6e6e6;"></div>
<div class="a" style="left:461.50px;top:339.20px;width:71.50px;height:1.60px;background:#999;"></div>
<div class="a" style="left:461.5px;top:350.9px;width:71.5px;height:0.9px;background:repeating-linear-gradient(90deg,#111 0 2px,transparent 2px 3px)"></div>
<div class="a" style="left:462.20px;top:345.30px;width:5.30px;height:13.00px;background:#e88a92;"></div>
<div class="a" style="left:468.30px;top:330.30px;width:4.70px;height:28.00px;background:#1d6a62;"></div>
<div class="a" style="left:474.20px;top:349.20px;width:4.50px;height:9.10px;background:#ee7420;"></div>
<div class="a" style="left:480.00px;top:345.80px;width:4.20px;height:12.50px;background:#f2c62a;"></div>
<div class="a" style="left:485.80px;top:347.50px;width:4.20px;height:10.80px;background:#6a22cc;"></div>
<div class="a" style="left:491.70px;top:348.30px;width:4.10px;height:10.00px;background:#a8ccf0;"></div>
<div class="a" style="left:497.00px;top:345.00px;width:4.70px;height:13.30px;background:#e880a2;"></div>
<div class="a" style="left:502.80px;top:345.80px;width:4.70px;height:12.50px;background:#44e096;"></div>
<div class="a" style="left:508.70px;top:341.70px;width:4.30px;height:16.60px;background:#f2c080;"></div>
<div class="a" style="left:514.20px;top:335.80px;width:5.00px;height:22.50px;background:#f6f070;"></div>
<div class="a" style="left:520.30px;top:330.00px;width:4.70px;height:28.30px;background:#c8a2f0;"></div>
<div class="a" style="left:526.20px;top:332.00px;width:4.60px;height:26.30px;background:#44c0f0;"></div>
<div class="a" style="left:456.00px;top:330.04px;width:4.00px;height:1.92px;overflow:hidden;white-space:nowrap;font-size:1.6px;line-height:1.92px;font-weight:normal;color:#888;text-align:left">000</div>
<div class="a" style="left:456.00px;top:334.24px;width:4.00px;height:1.92px;overflow:hidden;white-space:nowrap;font-size:1.6px;line-height:1.92px;font-weight:normal;color:#888;text-align:left">000</div>
<div class="a" style="left:456.00px;top:338.44px;width:4.00px;height:1.92px;overflow:hidden;white-space:nowrap;font-size:1.6px;line-height:1.92px;font-weight:normal;color:#888;text-align:left">000</div>
<div class="a" style="left:456.00px;top:342.64px;width:4.00px;height:1.92px;overflow:hidden;white-space:nowrap;font-size:1.6px;line-height:1.92px;font-weight:normal;color:#888;text-align:left">000</div>
<div class="a" style="left:456.00px;top:346.84px;width:4.00px;height:1.92px;overflow:hidden;white-space:nowrap;font-size:1.6px;line-height:1.92px;font-weight:normal;color:#888;text-align:left">000</div>
<div class="a" style="left:456.00px;top:351.04px;width:4.00px;height:1.92px;overflow:hidden;white-space:nowrap;font-size:1.6px;line-height:1.92px;font-weight:normal;color:#888;text-align:left">000</div>
<div class="a" style="left:456.00px;top:355.24px;width:4.00px;height:1.92px;overflow:hidden;white-space:nowrap;font-size:1.6px;line-height:1.92px;font-weight:normal;color:#888;text-align:left">000</div>
<div class="a" style="left:462.20px;top:360.74px;width:6.30px;height:1.92px;overflow:hidden;white-space:nowrap;font-size:1.6px;line-height:1.92px;font-weight:normal;color:#777;text-align:left">Jan</div>
<div class="a" style="left:468.30px;top:360.74px;width:5.70px;height:1.92px;overflow:hidden;white-space:nowrap;font-size:1.6px;line-height:1.92px;font-weight:normal;color:#777;text-align:left">Jan</div>
<div class="a" style="left:474.20px;top:360.74px;width:5.50px;height:1.92px;overflow:hidden;white-space:nowrap;font-size:1.6px;line-height:1.92px;font-weight:normal;color:#777;text-align:left">Jan</div>
<div class="a" style="left:480.00px;top:360.74px;width:5.20px;height:1.92px;overflow:hidden;white-space:nowrap;font-size:1.6px;line-height:1.92px;font-weight:normal;color:#777;text-align:left">Jan</div>
<div class="a" style="left:485.80px;top:360.74px;width:5.20px;height:1.92px;overflow:hidden;white-space:nowrap;font-size:1.6px;line-height:1.92px;font-weight:normal;color:#777;text-align:left">Jan</div>
<div class="a" style="left:491.70px;top:360.74px;width:5.10px;height:1.92px;overflow:hidden;white-space:nowrap;font-size:1.6px;line-height:1.92px;font-weight:normal;color:#777;text-align:left">Jan</div>
<div class="a" style="left:497.00px;top:360.74px;width:5.70px;height:1.92px;overflow:hidden;white-space:nowrap;font-size:1.6px;line-height:1.92px;font-weight:normal;color:#777;text-align:left">Jan</div>
<div class="a" style="left:502.80px;top:360.74px;width:5.70px;height:1.92px;overflow:hidden;white-space:nowrap;font-size:1.6px;line-height:1.92px;font-weight:normal;color:#777;text-align:left">Jan</div>
<div class="a" style="left:508.70px;top:360.74px;width:5.30px;height:1.92px;overflow:hidden;white-space:nowrap;font-size:1.6px;line-height:1.92px;font-weight:normal;color:#777;text-align:left">Jan</div>
<div class="a" style="left:514.20px;top:360.74px;width:6.00px;height:1.92px;overflow:hidden;white-space:nowrap;font-size:1.6px;line-height:1.92px;font-weight:normal;color:#777;text-align:left">Jan</div>
<div class="a" style="left:520.30px;top:360.74px;width:5.70px;height:1.92px;overflow:hidden;white-space:nowrap;font-size:1.6px;line-height:1.92px;font-weight:normal;color:#777;text-align:left">Jan</div>
<div class="a" style="left:526.20px;top:360.74px;width:5.60px;height:1.92px;overflow:hidden;white-space:nowrap;font-size:1.6px;line-height:1.92px;font-weight:normal;color:#777;text-align:left">Jan</div>
<div class="a" style="left:371.00px;top:371.98px;width:54.00px;height:2.64px;overflow:hidden;white-space:nowrap;font-size:2.2px;line-height:2.64px;font-weight:normal;color:#777;text-align:left">and value messages usage payment to fees levy network details for important number delivery date dynawatt important service network online statement meter delivery supply delivery statement billing com usage customer adjust period and supply government previous service details contact account</div>
<div class="a" style="left:371.00px;top:375.38px;width:40.00px;height:2.64px;overflow:hidden;white-space:nowrap;font-size:2.2px;line-height:2.64px;font-weight:normal;color:#777;text-align:left">charges reading value reference dynawatt important billing and notes credit com phone contract and request com payment account details fees month credit statement network email due summary rate due taxes reading tariff details request information electricity current electricity customer of</div>
<div class="a" style="left:365.80px;top:380.80px;width:165.00px;height:4.00px;background:#000;"></div>
<div class="a" style="left:371.00px;top:381.24px;width:24.00px;height:3.12px;overflow:hidden;white-space:nowrap;font-size:2.6px;line-height:3.12px;font-weight:bold;color:#fff;text-align:left">Important Messages</div>
<div class="a" style="left:438.00px;top:398.24px;width:77.50px;height:2.52px;overflow:hidden;white-space:nowrap;font-size:2.1px;line-height:2.52px;font-weight:normal;color:#888;text-align:left">the delivery kwh month reading electricity phone delivery email dynawatt month com customer www usage supply your in energy contact tariff information for www electricity current current request and and network energy for levy reference payment email reference current for</div>
<div class="a" style="left:368.50px;top:409.30px;width:29.00px;height:8px;white-space:nowrap;font-size:6.4px;line-height:8px;font-style:italic;color:#dc7428;transform:scaleX(0.86);-webkit-text-stroke:0.15px #dc7428;transform-origin:0 50%">Dynawatt</div>
<div class="a" style="left:396.00px;top:409.36px;width:18.00px;height:2.88px;overflow:hidden;white-space:nowrap;font-size:2.4px;line-height:2.88px;font-weight:normal;color:#444;text-align:left">to phone current important details summary government online energy of statement in delivery reference date dynawatt account billing energy value notes kwh amount added www messages online service contract online reference levy meter in com contact delivery phone consumption service</div>
<div class="a" style="left:396.00px;top:411.76px;width:21.00px;height:2.88px;overflow:hidden;white-space:nowrap;font-size:2.4px;line-height:2.88px;font-weight:normal;color:#444;text-align:left">payment important delivery total important dynawatt month charges consumption current added messages usage period taxes consumption delivery current reading payment information and billing customer supply service network levy total contract payment important details service online online consumption account email previous</div>
<div class="a" style="left:396.00px;top:414.16px;width:18.00px;height:2.88px;overflow:hidden;white-space:nowrap;font-size:2.4px;line-height:2.88px;font-weight:normal;color:#444;text-align:left">to network statement information added invoice electricity credit previous taxes date notes important your consumption balance network statement supply address www information consumption details information adjust charges information please phone for electricity meter customer delivery address added to amount dynawatt</div>
<div class="a" style="left:480.00px;top:403.98px;width:20.00px;height:2.64px;overflow:hidden;white-space:nowrap;font-size:2.2px;line-height:2.64px;font-weight:normal;color:#555;text-align:left">previous consumption due network added value invoice taxes levy request important payment reference the address and meter charges amount delivery network tariff rate current information important to energy kwh meter delivery summary and of to the adjust contact due your</div>
<div class="a" style="left:518.00px;top:403.98px;width:13.00px;height:2.64px;overflow:hidden;white-space:nowrap;font-size:2.2px;line-height:2.64px;font-weight:normal;color:#666;text-align:left">previous contact balance meter rate taxes due taxes energy period information delivery com usage service energy the levy www reading number charges electricity your in network charges invoice request online total supply www consumption added the to summary dynawatt credit</div>
<div class="a" style="left:480.00px;top:408.48px;width:18.00px;height:2.64px;overflow:hidden;white-space:nowrap;font-size:2.2px;line-height:2.64px;font-weight:normal;color:#555;text-align:left">important contact fees summary taxes electricity fees levy previous reference kwh reading service important the and to balance of supply customer reading service to messages email your the delivery credit request government billing charges rate billing previous fees summary current</div>
<div class="a" style="left:520.00px;top:408.48px;width:11.00px;height:2.64px;overflow:hidden;white-space:nowrap;font-size:2.2px;line-height:2.64px;font-weight:normal;color:#666;text-align:left">summary summary rate dynawatt delivery customer current due in due network to notes reference online usage number balance the details statement tariff address messages month for address summary electricity customer meter your consumption meter summary and account please important address</div>
<div class="a" style="left:480.00px;top:412.68px;width:11.00px;height:2.64px;overflow:hidden;white-space:nowrap;font-size:2.2px;line-height:2.64px;font-weight:normal;color:#555;text-align:left">levy date government statement consumption number to total network credit contract tariff contract online messages previous value consumption amount summary levy added important period for notes current the service consumption important reading com address billing government service address messages payment</div>
<div class="a" style="left:522.00px;top:412.68px;width:9.00px;height:2.64px;overflow:hidden;white-space:nowrap;font-size:2.2px;line-height:2.64px;font-weight:normal;color:#666;text-align:left">billing notes details please fees reading details messages statement network messages date value request com value balance usage usage com previous date the statement of tariff added reference meter adjust notes due online period supply delivery taxes in adjust messages</div>
<div class="a" style="left:480.00px;top:417.38px;width:15.00px;height:2.64px;overflow:hidden;white-space:nowrap;font-size:2.2px;line-height:2.64px;font-weight:normal;color:#555;text-align:left">service charges and of account your delivery levy service contact value charges date of of and energy date summary network and date in address and in statement taxes phone information billing dynawatt added dynawatt balance important request in notes invoice</div>
<div class="a" style="left:522.00px;top:417.38px;width:9.00px;height:2.64px;overflow:hidden;white-space:nowrap;font-size:2.2px;line-height:2.64px;font-weight:normal;color:#666;text-align:left">phone messages number government details your reading period period account and and government statement messages www phone network for dynawatt phone network network amount usage your energy your online phone summary period amount payment please tariff consumption of contact consumption</div>
<div class="a" style="left:480.00px;top:422.68px;width:29.00px;height:2.64px;overflow:hidden;white-space:nowrap;font-size:2.2px;line-height:2.64px;font-weight:normal;color:#555;text-align:left">levy amount to number phone information messages payment email added fees current usage statement amount delivery address of online rate of tariff previous email your contact usage number to balance adjust period number invoice dynawatt for adjust dynawatt amount service</div>
<div class="a" style="left:522.00px;top:422.68px;width:9.00px;height:2.64px;overflow:hidden;white-space:nowrap;font-size:2.2px;line-height:2.64px;font-weight:normal;color:#666;text-align:left">tariff the previous billing amount phone phone value to the contact kwh your kwh date online dynawatt customer added kwh taxes contact added com current consumption adjust government service amount dynawatt period government date meter kwh service account government network</div>
<div class="a" style="left:480.00px;top:420.55px;width:53.00px;height:0.50px;background:#aaa;"></div>
<div class="a" style="left:480.00px;top:428.38px;width:25.00px;height:2.64px;overflow:hidden;white-space:nowrap;font-size:2.2px;line-height:2.64px;font-weight:normal;color:#888;text-align:left">email for kwh online date credit online your network payment contact your supply levy supply important notes address for tariff notes summary of information period due consumption tariff important balance current service details value notes network meter government month energy</div>
<div class="a" style="left:506.00px;top:432.15px;width:27.00px;height:0.90px;background:#222;"></div>
<div class="a" style="left:506.15px;top:429.00px;width:0.70px;height:4.00px;background:#333;"></div>
<div class="a" style="left:467.00px;top:435.04px;width:36.00px;height:2.52px;overflow:hidden;white-space:nowrap;font-size:2.1px;line-height:2.52px;font-weight:normal;color:#888;text-align:left">balance fees phone date phone fees summary and contact taxes payment previous charges invoice com electricity request credit address payment service month electricity date email consumption taxes meter energy please month summary notes date reading current billing total due phone</div>
<div class="a" style="left:470.00px;top:438.00px;width:3.80px;height:5.80px;border:0.6px solid #888"></div>
<div class="a" style="left:475.00px;top:439.80px;width:7.00px;height:2.40px;overflow:hidden;white-space:nowrap;font-size:2px;line-height:2.40px;font-weight:normal;color:#777;text-align:left">number dynawatt com delivery charges reference charges value reading reference payment fees previous contact service reading payment added billing consumption value added reference your service added request your billing details charges value charges online due reference due tariff total billing</div>
<div class="a" style="left:491.50px;top:438.00px;width:3.80px;height:5.80px;border:0.6px solid #888"></div>
<div class="a" style="left:496.00px;top:439.80px;width:7.00px;height:2.40px;overflow:hidden;white-space:nowrap;font-size:2px;line-height:2.40px;font-weight:normal;color:#777;text-align:left">your network messages your total period notes details month and the supply statement online tariff date meter current value network amount month of charges consumption fees address supply the address reading messages statement tariff date adjust taxes address summary rate</div>
<div class="a" style="left:512.00px;top:438.00px;width:3.80px;height:5.80px;border:0.6px solid #888"></div>
<div class="a" style="left:517.00px;top:439.80px;width:7.00px;height:2.40px;overflow:hidden;white-space:nowrap;font-size:2px;line-height:2.40px;font-weight:normal;color:#777;text-align:left">statement meter request reference summary notes notes email summary date taxes statement meter contract customer summary account month tariff payment consumption network date your important rate reading online supply number number network service consumption statement tariff usage month of delivery</div>
<div class="a" style="left:384.00px;top:457.04px;width:14.00px;height:2.52px;overflow:hidden;white-space:nowrap;font-size:2.1px;line-height:2.52px;font-weight:normal;color:#555;text-align:left">statement rate previous contract request levy invoice customer important summary payment email the details com kwh messages value your and consumption balance period service number online government government billing previous contact your statement adjust month balance period number usage current</div>
<div class="a" style="left:384.00px;top:459.44px;width:13.00px;height:2.52px;overflow:hidden;white-space:nowrap;font-size:2.1px;line-height:2.52px;font-weight:normal;color:#555;text-align:left">of network online com information previous please rate address government month period contract customer supply current phone levy account reference delivery contact network to consumption total details supply to the in rate messages rate network date contract contact taxes consumption</div>
<div class="a" style="left:384.00px;top:461.84px;width:29.00px;height:2.52px;overflow:hidden;white-space:nowrap;font-size:2.1px;line-height:2.52px;font-weight:normal;color:#555;text-align:left">your meter due address supply government added previous value meter www added supply month period service energy levy email in www www network billing usage summary credit reference meter dynawatt added charges contact request network com dynawatt online dynawatt rate</div>
<div class="a" style="left:466.00px;top:454.54px;width:14.00px;height:2.52px;overflow:hidden;white-space:nowrap;font-size:2.1px;line-height:2.52px;font-weight:normal;color:#555;text-align:left">month amount phone credit summary energy email com usage contact online statement meter total number details contract consumption value tariff contract customer usage the www reference www total contact reading summary due payment usage kwh tariff delivery network for request</div>
<div class="a" style="left:466.00px;top:457.14px;width:23.00px;height:2.52px;overflow:hidden;white-space:nowrap;font-size:2.1px;line-height:2.52px;font-weight:normal;color:#555;text-align:left">important information charges levy due statement details to for dynawatt adjust important payment online government energy previous com contact network taxes the request the period government in summary amount consumption fees your taxes charges statement meter customer email electricity contact</div>
<div class="a" style="left:466.00px;top:459.74px;width:19.00px;height:2.52px;overflow:hidden;white-space:nowrap;font-size:2.1px;line-height:2.52px;font-weight:normal;color:#555;text-align:left">online charges period important supply online balance service delivery important date fees value online for request important important credit online network com due billing kwh date period previous for address com electricity request notes account credit account consumption rate meter</div>
<div class="t" style="left:417.5px;top:477px;font-size:5.5px;line-height:6px;color:#222;transform:scaleX(0.776);transform-origin:0 0">21 050003372450000007240 487749125</div>
<div class="a" style="left:538.00px;top:236.00px;width:5.00px;height:248.00px;background:#c4c0ba;"></div>
<div class="a" style="left:543.00px;top:235.00px;width:175.00px;height:249.00px;background:#fff;"></div>
<div class="a" style="left:549.50px;top:256.50px;width:29.00px;height:8px;white-space:nowrap;font-size:6.4px;line-height:8px;font-style:italic;color:#dc7428;transform:scaleX(0.86);-webkit-text-stroke:0.15px #dc7428;transform-origin:0 50%">Dynawatt</div>
<div class="a" style="left:577.00px;top:256.56px;width:18.00px;height:2.88px;overflow:hidden;white-space:nowrap;font-size:2.4px;line-height:2.88px;font-weight:normal;color:#444;text-align:left">dynawatt energy usage kwh credit to usage month important charges date kwh reading kwh service balance fees invoice address the service com payment month date adjust kwh request amount com month information tariff rate added contract in customer network information</div>
<div class="a" style="left:577.00px;top:258.96px;width:21.00px;height:2.88px;overflow:hidden;white-space:nowrap;font-size:2.4px;line-height:2.88px;font-weight:normal;color:#444;text-align:left">network summary of of delivery and contract address levy please www value your current usage kwh phone important charges and period number rate network energy please your invoice request information please usage email previous credit email messages period amount tariff</div>
<div class="a" style="left:577.00px;top:261.36px;width:18.00px;height:2.88px;overflow:hidden;white-space:nowrap;font-size:2.4px;line-height:2.88px;font-weight:normal;color:#444;text-align:left">please tariff consumption credit to dynawatt amount amount contact dynawatt kwh supply please current value total invoice current contact value period summary kwh online account please billing payment number due energy taxes value network for online and supply reference credit</div>
<div class="a" style="left:642.30px;top:252.30px;width:70.40px;height:16.50px;border:0.6px solid #555"></div>
<div class="a" style="left:642.30px;top:258.00px;width:70.40px;height:0.60px;background:#666;"></div>
<div class="a" style="left:647.00px;top:253.80px;width:17.00px;height:3.00px;overflow:hidden;white-space:nowrap;font-size:2.5px;line-height:3.00px;font-weight:normal;color:#333;text-align:left">notes supply balance adjust to supply due your the and billing dynawatt messages usage fees email request to online current messages balance delivery details delivery charges network contract date date fees notes contract for period and request network month network</div>
<div class="a" style="left:701.00px;top:253.80px;width:10.00px;height:3.00px;overflow:hidden;white-space:nowrap;font-size:2.5px;line-height:3.00px;font-weight:normal;color:#444;text-align:left">phone customer your request customer invoice and rate email your messages levy summary the information invoice dynawatt energy online due credit number consumption invoice due customer rate and payment of tariff adjust summary taxes levy messages to kwh adjust previous</div>
<div class="a" style="left:647.00px;top:258.86px;width:17.00px;height:2.88px;overflow:hidden;white-space:nowrap;font-size:2.4px;line-height:2.88px;font-weight:normal;color:#444;text-align:left">and dynawatt account email www rate adjust date messages supply electricity in the contract details fees taxes government request value charges usage email rate credit your for summary usage period important charges network the tariff the the contract request account</div>
<div class="a" style="left:699.00px;top:258.86px;width:12.00px;height:2.88px;overflow:hidden;white-space:nowrap;font-size:2.4px;line-height:2.88px;font-weight:normal;color:#555;text-align:left">added statement for period invoice account energy usage of total reference adjust reading electricity reference address customer levy to information email address number date statement charges reference phone for amount network credit number kwh month request levy notes consumption messages</div>
<div class="a" style="left:647.00px;top:262.06px;width:16.00px;height:2.88px;overflow:hidden;white-space:nowrap;font-size:2.4px;line-height:2.88px;font-weight:normal;color:#444;text-align:left">added to number and the to the notes summary contract dynawatt delivery for details due due reference fees service added invoice com kwh fees to payment information government adjust reference electricity usage contract service charges added www account information added</div>
<div class="a" style="left:699.00px;top:262.06px;width:12.00px;height:2.88px;overflow:hidden;white-space:nowrap;font-size:2.4px;line-height:2.88px;font-weight:normal;color:#555;text-align:left">summary service network www rate usage details email online electricity government total online phone adjust please amount total to delivery value summary number www dynawatt fees please invoice fees reference value the com charges fees com due taxes tariff value</div>
<div class="a" style="left:647.00px;top:264.86px;width:20.00px;height:2.88px;overflow:hidden;white-space:nowrap;font-size:2.4px;line-height:2.88px;font-weight:normal;color:#444;text-align:left">notes reading details details contract details fees email important meter www electricity amount date the payment consumption total tariff service taxes messages dynawatt phone notes online and amount com charges www notes invoice adjust charges total value statement www www</div>
<div class="a" style="left:699.00px;top:264.86px;width:12.00px;height:2.88px;overflow:hidden;white-space:nowrap;font-size:2.4px;line-height:2.88px;font-weight:normal;color:#555;text-align:left">credit contract email messages kwh contact balance for balance credit kwh www details billing online phone reference levy value meter due fees to contract supply month number period levy consumption taxes phone the online details month balance for balance www</div>
<div class="a" style="left:547.00px;top:273.30px;width:164.30px;height:4.50px;background:#000;"></div>
<div class="a" style="left:550.00px;top:273.64px;width:58.00px;height:3.72px;overflow:hidden;white-space:nowrap;font-size:3.1px;line-height:3.72px;font-weight:normal;color:#fff;text-align:left">Meter Reading and Consumption Details</div>
<div class="a" style="left:547.30px;top:285.40px;width:164.40px;height:13.00px;border:0.7px solid #555"></div>
<div class="a" style="left:575.95px;top:285.40px;width:0.60px;height:13.00px;background:#666;"></div>
<div class="a" style="left:592.20px;top:285.40px;width:0.60px;height:13.00px;background:#666;"></div>
<div class="a" style="left:603.00px;top:285.40px;width:0.60px;height:13.00px;background:#666;"></div>
<div class="a" style="left:616.40px;top:285.40px;width:0.60px;height:13.00px;background:#666;"></div>
<div class="a" style="left:628.90px;top:285.40px;width:0.60px;height:13.00px;background:#666;"></div>
<div class="a" style="left:643.00px;top:285.40px;width:0.60px;height:13.00px;background:#666;"></div>
<div class="a" style="left:662.20px;top:285.40px;width:0.60px;height:13.00px;background:#666;"></div>
<div class="a" style="left:673.00px;top:285.40px;width:0.60px;height:13.00px;background:#666;"></div>
<div class="a" style="left:684.30px;top:285.40px;width:0.60px;height:13.00px;background:#666;"></div>
<div class="a" style="left:592.50px;top:281.20px;width:24.20px;height:4.40px;border:0.5px solid #888"></div>
<div class="a" style="left:599.00px;top:282.26px;width:11.00px;height:2.28px;overflow:hidden;white-space:nowrap;font-size:1.9px;line-height:2.28px;font-weight:normal;color:#666;text-align:left">Readings</div>
<div class="a" style="left:662.50px;top:281.20px;width:22.10px;height:4.40px;border:0.5px solid #888"></div>
<div class="a" style="left:666.00px;top:282.26px;width:15.00px;height:2.28px;overflow:hidden;white-space:nowrap;font-size:1.9px;line-height:2.28px;font-weight:normal;color:#666;text-align:left">Billed Units</div>
<div class="a" style="left:553.09px;top:286.62px;width:17.37px;height:2.76px;overflow:hidden;white-space:nowrap;font-size:2.3px;line-height:2.76px;font-weight:normal;color:#444;text-align:center">contact email in meter supply taxes previous important consumption notes com previous payment usage current taxes billing billing period billing for customer www date amount information adjust adjust contact supply email previous statement charges reading and levy kwh information invoice</div>
<div class="a" style="left:551.64px;top:291.92px;width:20.27px;height:2.76px;overflow:hidden;white-space:nowrap;font-size:2.3px;line-height:2.76px;font-weight:normal;color:#555;text-align:center">your information network month online for charges payment fees of contact total previous fees of your and period invoice invoice adjust kwh taxes adjust period consumption levy email total tariff your government electricity email taxes dynawatt fees added energy consumption</div>
<div class="a" style="left:579.50px;top:286.62px;width:9.75px;height:2.76px;overflow:hidden;white-space:nowrap;font-size:2.3px;line-height:2.76px;font-weight:normal;color:#444;text-align:center">com and please billing customer details for of to and credit information invoice number month kwh government statement messages important in invoice fees network supply levy account number added for consumption payment adjust meter summary for added messages request current</div>
<div class="a" style="left:578.69px;top:291.92px;width:11.38px;height:2.76px;overflow:hidden;white-space:nowrap;font-size:2.3px;line-height:2.76px;font-weight:normal;color:#555;text-align:center">supply customer electricity statement service information added reading reference meter customer and government consumption government contact to important credit important of com messages to consumption online current number address summary phone usage to your charges payment phone the government billing</div>
<div class="a" style="left:594.66px;top:286.62px;width:6.48px;height:2.76px;overflow:hidden;white-space:nowrap;font-size:2.3px;line-height:2.76px;font-weight:normal;color:#444;text-align:center">contract address due taxes taxes electricity phone summary your usage payment information consumption details account information usage details service electricity reading www charges messages contract important the month number messages billing www and service levy com meter in levy delivery</div>
<div class="a" style="left:594.12px;top:291.92px;width:7.56px;height:2.76px;overflow:hidden;white-space:nowrap;font-size:2.3px;line-height:2.76px;font-weight:normal;color:#555;text-align:center">invoice information notes address energy email electricity added your levy levy details com of network in electricity value please payment dynawatt meter usage account network information charges please meter address to customer number electricity credit notes charges electricity invoice charges</div>
<div class="a" style="left:605.98px;top:286.62px;width:8.04px;height:2.76px;overflow:hidden;white-space:nowrap;font-size:2.3px;line-height:2.76px;font-weight:normal;color:#444;text-align:center">total rate rate reading charges of total adjust com amount please www service consumption kwh your payment month important usage account charges value current to network important online request levy period credit usage com amount account consumption phone billing value</div>
<div class="a" style="left:605.31px;top:291.92px;width:9.38px;height:2.76px;overflow:hidden;white-space:nowrap;font-size:2.3px;line-height:2.76px;font-weight:normal;color:#555;text-align:center">information tariff consumption reading levy reading your details amount rate important service to com reference value amount charges value network of electricity www current please current energy electricity the online com government previous amount customer information tariff and messages rate</div>
<div class="a" style="left:619.20px;top:286.62px;width:7.50px;height:2.76px;overflow:hidden;white-space:nowrap;font-size:2.3px;line-height:2.76px;font-weight:normal;color:#444;text-align:center">period total adjust customer energy com customer previous email meter number customer billing fees for com for notes fees reference kwh phone total customer period energy delivery request number network www billing taxes due billing the in date reference previous</div>
<div class="a" style="left:618.58px;top:291.92px;width:8.75px;height:2.76px;overflow:hidden;white-space:nowrap;font-size:2.3px;line-height:2.76px;font-weight:normal;color:#555;text-align:center">rate com reference messages to previous www contact please amount com network invoice government kwh for the rate messages phone usage energy invoice request total reading customer adjust com information and service date information adjust fees statement the contact previous</div>
<div class="a" style="left:632.02px;top:286.62px;width:8.46px;height:2.76px;overflow:hidden;white-space:nowrap;font-size:2.3px;line-height:2.76px;font-weight:normal;color:#444;text-align:center">levy electricity added previous in account contact number reading dynawatt com invoice messages payment email number invoice details adjust phone important to amount invoice your added reference kwh electricity current of previous www balance energy of reading added for meter</div>
<div class="a" style="left:631.32px;top:291.92px;width:9.87px;height:2.76px;overflow:hidden;white-space:nowrap;font-size:2.3px;line-height:2.76px;font-weight:normal;color:#555;text-align:center">delivery customer service your due consumption credit dynawatt added of of your levy date address billing consumption of com fees network adjust month previous reading date electricity your contact invoice your number customer and total account month kwh taxes current</div>
<div class="a" style="left:647.14px;top:286.62px;width:11.52px;height:2.76px;overflow:hidden;white-space:nowrap;font-size:2.3px;line-height:2.76px;font-weight:normal;color:#444;text-align:center">phone total account account account supply notes energy balance taxes meter invoice meter charges request adjust month address supply service government dynawatt of government network details date rate fees com fees previous and supply value government to email information please</div>
<div class="a" style="left:646.18px;top:291.92px;width:13.44px;height:2.76px;overflow:hidden;white-space:nowrap;font-size:2.3px;line-height:2.76px;font-weight:normal;color:#555;text-align:center">supply reading com please number tariff com value adjust www messages payment dynawatt supply statement credit to payment previous charges added contract levy contact reading invoice tariff request network the information your previous customer in payment tariff billing current request</div>
<div class="a" style="left:664.66px;top:286.62px;width:6.48px;height:2.76px;overflow:hidden;white-space:nowrap;font-size:2.3px;line-height:2.76px;font-weight:normal;color:#444;text-align:center">of meter energy rate value supply email levy month network and www value notes value notes and and invoice summary delivery total messages contract delivery total network balance www levy and delivery your consumption account previous the tariff reading government</div>
<div class="a" style="left:664.12px;top:291.92px;width:7.56px;height:2.76px;overflow:hidden;white-space:nowrap;font-size:2.3px;line-height:2.76px;font-weight:normal;color:#555;text-align:center">and amount account due contact summary service account to fees added added messages current important total for month taxes balance levy charges electricity account current energy notes amount messages rate adjust amount total reading address for address balance amount com</div>
<div class="a" style="left:675.56px;top:286.62px;width:6.78px;height:2.76px;overflow:hidden;white-space:nowrap;font-size:2.3px;line-height:2.76px;font-weight:normal;color:#444;text-align:center">month delivery date adjust meter summary details billing credit number information month important credit due delivery usage usage dynawatt due of reading please meter billing current balance details value taxes supply the levy contact service invoice government reading payment credit</div>
<div class="a" style="left:675.00px;top:291.92px;width:7.91px;height:2.76px;overflow:hidden;white-space:nowrap;font-size:2.3px;line-height:2.76px;font-weight:normal;color:#555;text-align:center">payment kwh total amount notes period amount to email of service credit in fees invoice contact electricity request to previous details com electricity contact address phone your previous meter added contract address levy charges rate please request contact energy contract</div>
<div class="a" style="left:690.02px;top:286.62px;width:16.26px;height:2.76px;overflow:hidden;white-space:nowrap;font-size:2.3px;line-height:2.76px;font-weight:normal;color:#444;text-align:center">billing delivery delivery statement total dynawatt com previous your address statement address levy phone usage total online network number network messages number energy rate invoice your the rate email credit taxes account kwh supply added adjust charges rate statement online</div>
<div class="a" style="left:688.67px;top:291.92px;width:18.97px;height:2.76px;overflow:hidden;white-space:nowrap;font-size:2.3px;line-height:2.76px;font-weight:normal;color:#555;text-align:center">total invoice delivery fees account details statement electricity date month amount reference contact amount contact supply previous credit fees details summary payment the online address statement kwh details electricity due customer balance due www charges tariff adjust details taxes meter</div>
<div class="a" style="left:552.00px;top:315.44px;width:161.00px;height:3.12px;overflow:hidden;white-space:nowrap;font-size:2.6px;line-height:3.12px;font-weight:normal;color:#6a6a6a;text-align:left">for dynawatt messages please payment value com fees com reading added payment period value tariff important messages added the of to consumption adjust important kwh due messages balance email due balance delivery tariff previous dynawatt previous reference contract tariff details</div>
<div class="a" style="left:552.00px;top:315.44px;width:15.00px;height:3.12px;overflow:hidden;white-space:nowrap;font-size:2.6px;line-height:3.12px;font-weight:bold;color:#444;text-align:left">contact and fees contract contact electricity government the contract in previous meter your rate information current supply summary credit levy adjust charges notes billing added rate kwh supply electricity email delivery important taxes please date previous address dynawatt for service</div>
<div class="a" style="left:552.00px;top:320.64px;width:161.00px;height:3.12px;overflow:hidden;white-space:nowrap;font-size:2.6px;line-height:3.12px;font-weight:normal;color:#6a6a6a;text-align:left">information payment information value in dynawatt due current customer account summary important amount date please dynawatt levy current notes value rate network service previous amount dynawatt current period current important billing rate customer to network adjust fees your contact adjust</div>
<div class="a" style="left:552.00px;top:325.14px;width:161.00px;height:3.12px;overflow:hidden;white-space:nowrap;font-size:2.6px;line-height:3.12px;font-weight:normal;color:#6a6a6a;text-align:left">network reference and date rate the online the due number date credit the messages due supply com your taxes the request of billing customer kwh email credit adjust total invoice summary important balance current charges adjust billing rate fees account</div>
<div class="a" style="left:552.00px;top:325.14px;width:16.00px;height:3.12px;overflow:hidden;white-space:nowrap;font-size:2.6px;line-height:3.12px;font-weight:bold;color:#444;text-align:left">phone current your of your in service government previous kwh dynawatt month delivery tariff www www to summary the contract email taxes payment charges number reading contact total service and total network your statement important government taxes in contact billing</div>
<div class="a" style="left:552.00px;top:329.74px;width:32.00px;height:3.12px;overflow:hidden;white-space:nowrap;font-size:2.6px;line-height:3.12px;font-weight:normal;color:#6a6a6a;text-align:left">electricity delivery details of to meter notes supply taxes phone added and electricity to delivery reading reading meter and service levy taxes statement customer payment the important invoice dynawatt month due rate fees consumption added notes kwh value government in</div>
<div class="a" style="left:552.00px;top:329.74px;width:14.00px;height:3.12px;overflow:hidden;white-space:nowrap;font-size:2.6px;line-height:3.12px;font-weight:bold;color:#444;text-align:left">contract number taxes meter rate due supply notes number kwh of online invoice reading for customer service contact details customer the value notes amount supply credit information account please balance invoice details please supply summary in added account tariff dynawatt</div>
<div class="a" style="left:552.00px;top:338.14px;width:88.00px;height:3.12px;overflow:hidden;white-space:nowrap;font-size:2.6px;line-height:3.12px;font-weight:normal;color:#6a6a6a;text-align:left">messages contact credit reading details billing month amount contact reading tariff and total request of please www charges reading number energy for billing total balance com online energy credit electricity month com online www reading service information contact period reference</div>
<div class="a" style="left:552.00px;top:338.14px;width:18.00px;height:3.12px;overflow:hidden;white-space:nowrap;font-size:2.6px;line-height:3.12px;font-weight:bold;color:#444;text-align:left">added taxes period due government usage current period meter statement electricity contract energy government number consumption fees important electricity taxes information balance reading supply fees current period energy invoice phone account contract current for balance statement total address email phone</div>
<div class="a" style="left:558.00px;top:342.14px;width:76.00px;height:3.12px;overflow:hidden;white-space:nowrap;font-size:2.6px;line-height:3.12px;font-weight:normal;color:#6a6a6a;text-align:left">details of request number adjust charges due the details number for date customer email statement meter payment billing request important your in credit messages information www current phone due billing in number due for meter amount energy dynawatt number supply</div>
<div class="a" style="left:558.00px;top:342.14px;width:14.00px;height:3.12px;overflow:hidden;white-space:nowrap;font-size:2.6px;line-height:3.12px;font-weight:bold;color:#444;text-align:left">statement messages month email network notes network invoice invoice energy levy total customer of information contract www request date contact important rate of request number date month reading statement supply contact important network your customer amount account total messages fees</div>
<div class="a" style="left:558.00px;top:346.74px;width:135.00px;height:3.12px;overflow:hidden;white-space:nowrap;font-size:2.6px;line-height:3.12px;font-weight:normal;color:#6a6a6a;text-align:left">reference meter number contract and supply and fees service tariff billing phone due charges details address and credit due network network government customer adjust com meter adjust kwh number previous consumption levy tariff request contract adjust contact levy the account</div>
<div class="a" style="left:558.00px;top:351.44px;width:29.00px;height:3.12px;overflow:hidden;white-space:nowrap;font-size:2.6px;line-height:3.12px;font-weight:normal;color:#6a6a6a;text-align:left">email summary amount important and notes statement taxes fees date to value reading contract account and online payment period email messages contact address messages for rate date address supply address delivery com meter total previous for contact government government tariff</div>
<div class="a" style="left:558.00px;top:351.44px;width:13.00px;height:3.12px;overflow:hidden;white-space:nowrap;font-size:2.6px;line-height:3.12px;font-weight:bold;color:#444;text-align:left">date current address date com com network network electricity current to contract date period tariff contract current statement levy email energy kwh phone billing and government date dynawatt www credit consumption customer balance service value email network reading balance consumption</div>
<div class="a" style="left:552.00px;top:360.14px;width:153.00px;height:3.12px;overflow:hidden;white-space:nowrap;font-size:2.6px;line-height:3.12px;font-weight:normal;color:#6a6a6a;text-align:left">reading added to service contact contact rate for billing network due energy energy contract number kwh request usage reading number reading the current date electricity energy levy summary contact date due energy notes number charges taxes adjust reading please network</div>
<div class="a" style="left:552.00px;top:362.64px;width:66.00px;height:3.12px;overflow:hidden;white-space:nowrap;font-size:2.6px;line-height:3.12px;font-weight:normal;color:#6a6a6a;text-align:left">credit tariff phone government service contract request charges fees value month com email supply com period account date amount the information kwh period and to important total due billing account date due electricity added account service payment electricity month adjust</div>
<div class="a" style="left:552.00px;top:362.64px;width:10.00px;height:3.12px;overflow:hidden;white-space:nowrap;font-size:2.6px;line-height:3.12px;font-weight:bold;color:#444;text-align:left">credit in and the month value phone kwh for address number please value address adjust consumption your summary kwh added tariff kwh billing online balance payment the contact messages for summary amount network delivery levy reference summary date consumption summary</div>
<div class="a" style="left:552.00px;top:370.94px;width:160.00px;height:3.12px;overflow:hidden;white-space:nowrap;font-size:2.6px;line-height:3.12px;font-weight:normal;color:#6a6a6a;text-align:left">reading for energy address of of email supply com charges amount information customer added network previous statement important levy contract service your online reference com due address delivery payment details customer summary dynawatt contact payment meter information energy credit messages</div>
<div class="a" style="left:552.00px;top:370.94px;width:12.00px;height:3.12px;overflow:hidden;white-space:nowrap;font-size:2.6px;line-height:3.12px;font-weight:bold;color:#444;text-align:left">reading to and your adjust www network messages dynawatt number supply important to government period kwh tariff kwh reference service due fees taxes network for charges date meter service energy electricity network value supply for value and statement electricity usage</div>
<div class="a" style="left:552.00px;top:374.24px;width:94.00px;height:3.12px;overflow:hidden;white-space:nowrap;font-size:2.6px;line-height:3.12px;font-weight:normal;color:#6a6a6a;text-align:left">billing period reference information the and com delivery statement com online current tariff charges amount in request to current number rate notes please in electricity the request added dynawatt customer important reference service details amount the electricity www adjust contract</div>
<div class="a" style="left:552.00px;top:374.24px;width:11.00px;height:3.12px;overflow:hidden;white-space:nowrap;font-size:2.6px;line-height:3.12px;font-weight:bold;color:#444;text-align:left">usage for balance payment previous month tariff value balance messages network invoice charges value supply added fees delivery for www www to reference contract please fees request due adjust adjust rate government information usage request summary energy due invoice please</div>
<div class="a" style="left:552.00px;top:385.14px;width:61.00px;height:3.12px;overflow:hidden;white-space:nowrap;font-size:2.6px;line-height:3.12px;font-weight:normal;color:#6a6a6a;text-align:left">previous notes network of statement billing meter contract address electricity date for charges request taxes information credit taxes government rate information previous reading adjust electricity supply consumption account meter customer added notes billing credit address account meter invoice com consumption</div>
<div class="a" style="left:552.00px;top:389.74px;width:153.00px;height:3.12px;overflow:hidden;white-space:nowrap;font-size:2.6px;line-height:3.12px;font-weight:normal;color:#6a6a6a;text-align:left">billing previous request consumption number kwh meter credit month meter balance adjust date account address current messages taxes adjust for statement rate contract in www electricity energy invoice current credit current number com phone government account network added reference current</div>
<div class="a" style="left:552.00px;top:389.74px;width:18.00px;height:3.12px;overflow:hidden;white-space:nowrap;font-size:2.6px;line-height:3.12px;font-weight:bold;color:#444;text-align:left">supply balance service added added billing adjust usage email for energy information email delivery to supply reading to information and the date fees added period month due account number energy tariff messages notes for delivery invoice billing adjust account messages</div>
<div class="a" style="left:552.00px;top:393.94px;width:38.00px;height:3.12px;overflow:hidden;white-space:nowrap;font-size:2.6px;line-height:3.12px;font-weight:normal;color:#6a6a6a;text-align:left">reference invoice contact service information address com please www phone address contract the dynawatt consumption account reading information current address previous government contact reference kwh and dynawatt fees contact your contact credit payment www fees account and levy messages contract</div>
<div class="a" style="left:552.00px;top:393.94px;width:13.00px;height:3.12px;overflow:hidden;white-space:nowrap;font-size:2.6px;line-height:3.12px;font-weight:bold;color:#444;text-align:left">billing date electricity of com taxes electricity account online of kwh account in www consumption customer charges credit levy amount invoice contract request details com charges taxes notes consumption balance date phone www total government electricity the of please charges</div>
<div class="a" style="left:552.00px;top:398.94px;width:160.00px;height:3.12px;overflow:hidden;white-space:nowrap;font-size:2.6px;line-height:3.12px;font-weight:normal;color:#6a6a6a;text-align:left">kwh current usage invoice and www com and in customer delivery dynawatt summary contract fees supply com usage added service date statement electricity supply meter invoice added delivery previous in information please previous period due important energy taxes delivery and</div>
<div class="a" style="left:552.00px;top:398.94px;width:13.00px;height:3.12px;overflow:hidden;white-space:nowrap;font-size:2.6px;line-height:3.12px;font-weight:bold;color:#444;text-align:left">reference month please adjust month details levy contact payment the please taxes usage please meter of reading month notes fees and network charges reference request charges total details total in current consumption contact adjust adjust previous taxes added energy date</div>
<div class="a" style="left:552.00px;top:403.14px;width:28.00px;height:3.12px;overflow:hidden;white-space:nowrap;font-size:2.6px;line-height:3.12px;font-weight:normal;color:#6a6a6a;text-align:left">and messages credit important email your invoice billing email tariff network adjust network your information online amount online online reading invoice online government charges contract in due added phone please address information current statement network reading contact invoice credit number</div>
<div class="a" style="left:552.00px;top:403.14px;width:8.00px;height:3.12px;overflow:hidden;white-space:nowrap;font-size:2.6px;line-height:3.12px;font-weight:bold;color:#444;text-align:left">number please request payment notes online usage current information important reading www reading contact charges energy period the notes invoice request month supply electricity supply adjust email due levy service taxes in charges due reference due consumption reference adjust credit</div>
<div class="a" style="left:552.00px;top:407.74px;width:126.00px;height:3.12px;overflow:hidden;white-space:nowrap;font-size:2.6px;line-height:3.12px;font-weight:normal;color:#6a6a6a;text-align:left">request levy added please in messages billing taxes levy for taxes customer due taxes contact month contact value email date tariff reference invoice levy in com kwh payment important customer total important consumption balance of phone service network total reading</div>
<div class="a" style="left:552.00px;top:412.24px;width:153.00px;height:3.12px;overflow:hidden;white-space:nowrap;font-size:2.6px;line-height:3.12px;font-weight:normal;color:#6a6a6a;text-align:left">period to supply electricity billing important fees amount invoice current summary your billing reading reference to added energy fees to for in www dynawatt notes adjust please reference energy the billing total balance summary notes the network payment levy of</div>
<div class="a" style="left:552.00px;top:412.24px;width:13.00px;height:3.12px;overflow:hidden;white-space:nowrap;font-size:2.6px;line-height:3.12px;font-weight:bold;color:#444;text-align:left">invoice address of summary kwh supply delivery contract www please customer to invoice rate online and for network delivery please email kwh fees supply consumption government month invoice the of levy payment adjust summary payment to rate delivery number reference</div>
<div class="a" style="left:552.00px;top:415.64px;width:10.00px;height:3.12px;overflow:hidden;white-space:nowrap;font-size:2.6px;line-height:3.12px;font-weight:normal;color:#6a6a6a;text-align:left">com please service for of charges period charges previous email com for contact dynawatt information tariff contact balance contract taxes invoice credit charges request value fees adjust please meter address delivery consumption dynawatt number usage phone and email summary due</div>
<div class="a" style="left:552.00px;top:419.64px;width:108.00px;height:3.12px;overflow:hidden;white-space:nowrap;font-size:2.6px;line-height:3.12px;font-weight:normal;color:#6a6a6a;text-align:left">credit value number month credit total information previous previous government total energy consumption the credit usage your summary www email value information charges network meter supply phone value for levy of delivery energy account to balance current period credit email</div>
<div class="a" style="left:552.00px;top:419.64px;width:17.00px;height:3.12px;overflow:hidden;white-space:nowrap;font-size:2.6px;line-height:3.12px;font-weight:bold;color:#444;text-align:left">information address charges important customer invoice address statement messages email service previous of contact email number reading electricity value invoice kwh period network messages contact important www details month period payment online important of your request reference the in www</div>
<div class="a" style="left:552.00px;top:423.94px;width:78.00px;height:3.12px;overflow:hidden;white-space:nowrap;font-size:2.6px;line-height:3.12px;font-weight:normal;color:#6a6a6a;text-align:left">summary messages supply contract invoice contact to meter adjust details rate messages messages details government request network invoice meter of consumption of consumption number tariff reading meter contact period payment phone tariff summary total due notes kwh period value adjust</div>
<div class="a" style="left:552.00px;top:428.44px;width:136.00px;height:3.12px;overflow:hidden;white-space:nowrap;font-size:2.6px;line-height:3.12px;font-weight:normal;color:#6a6a6a;text-align:left">usage invoice levy invoice email total added phone energy dynawatt due amount for please the kwh invoice important reading service payment contract delivery fees added electricity period taxes to notes online period statement notes address information and email email invoice</div>
<div class="a" style="left:552.00px;top:428.44px;width:14.00px;height:3.12px;overflow:hidden;white-space:nowrap;font-size:2.6px;line-height:3.12px;font-weight:bold;color:#444;text-align:left">invoice energy levy due contract of www account charges value messages the energy messages due charges current address contact your phone service month contract supply for rate please summary messages request number supply notes please value important and taxes reading</div>
<!--/PAGES-->

<!-- WATERMARK -->

<!--WM-->
<svg style="left:0;top:0" width="1080" height="720" viewBox="0 0 1080 720"><g fill="none" stroke="#1c1c1c" stroke-width="2.3" stroke-linejoin="bevel"><path d="M871.8 667.8 H859.7 V696.2 H871.8 M859.7 681 H870.5"/><path d="M878 666 V697 M892.6 666.2 L878.5 683 M881.8 679.6 L893.7 696.8"/><ellipse cx="907.7" cy="681.9" rx="10.2" ry="14.6"/><path d="M940.8 671.5 A9.3 14.6 0 1 0 941.6 692.8 V681.6 H936"/><path d="M961.9 667.5 H950.6 V696.3 H961.9 M950.6 681.1 H960.8"/><path d="M967.6 697 L977 666.5 L986.2 697 M971 685.5 H983"/></g><circle cx="993" cy="695.6" r="1.7" fill="#1c1c1c"/><g fill="none" stroke="#84aa1e" stroke-width="2.6"><ellipse cx="1010.3" cy="681.6" rx="10.6" ry="14.7"/><path d="M1027.6 697.5 V667 H1035.2 Q1043 667 1043 674.9 Q1043 682.8 1035.2 682.8 H1027.6 M1035.6 682.8 L1044.2 697.5"/><path d="M1066.3 671.3 A9.6 14.7 0 1 0 1067.3 692.6 V681.6 H1060.5"/></g></svg>
<svg style="left:901.5px;top:697.5px" width="9" height="6" viewBox="0 0 9 6"><path d="M0.5 3 Q4.5 -1 8.5 3 Q4.5 7 0.5 3Z" stroke="#bdbdbd" fill="none" stroke-width="0.9"/><circle cx="4.5" cy="3" r="1.5" fill="#bdbdbd"/></svg>
<svg style="left:942px;top:695.5px" width="10" height="11" viewBox="0 0 10 11"><path d="M0.8 3 V0.9 H9.2 V3 M5 0.9 V10.2 M3 10.2 H7" stroke="#e6e6e6" fill="none" stroke-width="1.3"/></svg>
<div class="t" style="left:963px;top:668.8px;font-size:6.3px;color:#e4e4e4;letter-spacing:-0.2px">125..</div>
<div class="t" style="left:963px;top:697.3px;font-size:6.3px;color:#e4e4e4;letter-spacing:-0.2px">01.01.1990</div>
<svg style="left:901.5px;top:669px" width="9" height="6" viewBox="0 0 9 6"><path d="M0.5 3 Q4.5 -1 8.5 3 Q4.5 7 0.5 3Z" stroke="#bdbdbd" fill="none" stroke-width="0.9"/><circle cx="4.5" cy="3" r="1.5" fill="#bdbdbd"/></svg>
<svg style="left:942px;top:667px" width="10" height="11" viewBox="0 0 10 11"><path d="M0.8 3 V0.9 H9.2 V3 M5 0.9 V10.2 M3 10.2 H7" stroke="#e6e6e6" fill="none" stroke-width="1.3"/></svg>
</body></html>
